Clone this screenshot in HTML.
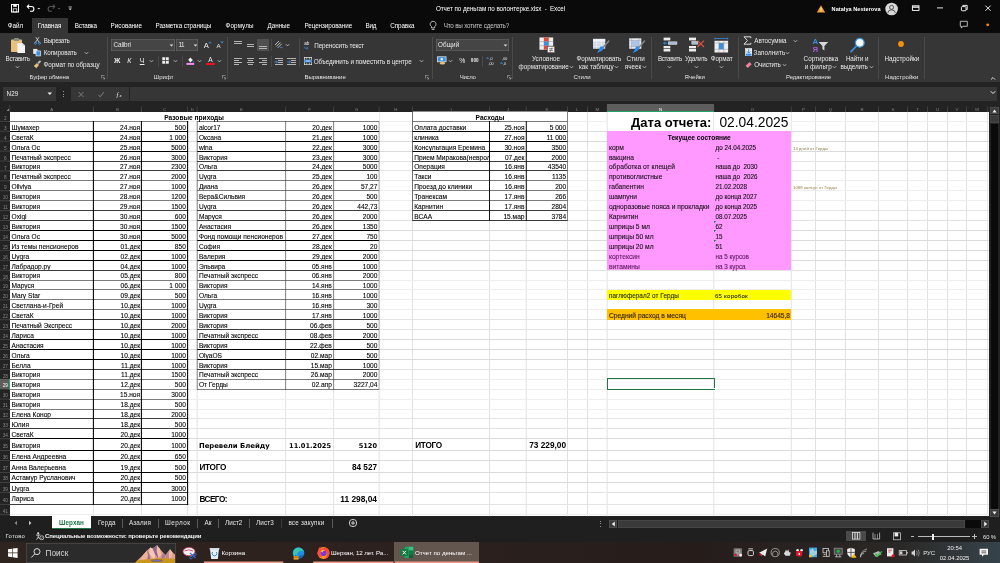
<!DOCTYPE html>
<html lang="ru"><head><meta charset="utf-8"><title>Отчет по деньгам по волонтерке.xlsx - Excel</title><style>
html,body{margin:0;padding:0;background:#0a0a0a;}
#app{position:relative;width:1000px;height:563px;overflow:hidden;will-change:transform;font-family:"Liberation Sans",sans-serif;}
#app div,#app span.t,#app svg{position:absolute;}
#app span.t{white-space:nowrap;display:block;}
#app span.k{-webkit-text-stroke:.1px currentColor;}
</style></head><body>
<div id="app">
<div style="left:0.00px;top:0.00px;width:1000.00px;height:33.00px;background:#0a0a0a;"></div>
<div style="left:0.00px;top:33.00px;width:1000.00px;height:49.20px;background:#363636;"></div>
<div style="left:0.00px;top:82.20px;width:1000.00px;height:29.60px;background:#232323;"></div>
<div style="left:9.80px;top:111.80px;width:979.20px;height:404.50px;background:#ffffff;"></div>
<div style="left:0.00px;top:111.80px;width:9.80px;height:404.50px;background:#232323;"></div>
<div style="left:989.00px;top:103.50px;width:11.00px;height:413.80px;background:#232323;"></div>
<div style="left:0.00px;top:516.30px;width:1000.00px;height:13.30px;background:#1f1f1f;"></div>
<div style="left:0.00px;top:529.60px;width:1000.00px;height:12.40px;background:#1f1f1f;"></div>
<div style="left:0.00px;top:541.80px;width:1000.00px;height:21.20px;background:#2b211e;background:linear-gradient(90deg,#30241f 0%,#2c211e 40%,#261d1b 70%,#2a2826 90%,#36434b 100%);"></div>
<span class="t" style="top:4px;font-size:6.3px;line-height:9px;color:#ffffff;letter-spacing:-0.080px;left:436.00px;white-space:pre;">Отчет по деньгам по волонтерке.xlsx  -  Excel</span>
<span class="t" style="top:5px;font-size:5.6px;line-height:8px;color:#ffffff;font-weight:700;letter-spacing:0.028px;left:831.60px;">Natalya Nesterova</span>
<svg style="left:10px;top:2px" width="70" height="14" viewBox="0 0 70 14">
<g fill="none" stroke="#fff" stroke-width="1">
<rect x="1.5" y="2.5" width="7" height="7.5"/><rect x="3.2" y="2.5" width="3.6" height="2.3" fill="#fff" stroke="none"/><rect x="3.2" y="6.8" width="3.6" height="3.2" stroke-width=".7"/>
<path d="M17.5 4.5 h4 a2.3 2.3 0 0 1 0 4.8 h-1.5" stroke-width="1.1"/><path d="M19.2 2.6 l-2 2 l2 2" stroke-width="1.1"/>
<path d="M44.5 4.5 h-4 a2.3 2.3 0 0 0 0 4.8 h1.5" stroke="#555" stroke-width="1.1"/><path d="M42.8 2.6 l2 2 l-2 2" stroke="#555" stroke-width="1.1"/>
</g>
<path d="M27.3 6 h3 l-1.5 1.6z" fill="#ddd"/><path d="M47.5 6 h3 l-1.5 1.6z" fill="#555"/>
<path d="M58.5 5 h3.4" stroke="#ddd" stroke-width=".8"/><path d="M58.6 6.6 h3.2 l-1.6 1.7z" fill="#ddd"/>
</svg>
<svg style="left:812px;top:0" width="188" height="33" viewBox="0 0 188 33">
<path d="M9 5.2 L13.2 12.6 H4.8z" fill="#f0a030"/><path d="M9 7.6 v2.8" stroke="#fff" stroke-width=".8"/><circle cx="9" cy="11.4" r=".45" fill="#fff"/>
<circle cx="79.6" cy="9" r="6.3" fill="#d8d8d8"/><circle cx="79.6" cy="7.4" r="2" fill="none" stroke="#333" stroke-width=".8"/><path d="M75.8 12.8 a3.9 3.9 0 0 1 7.6 0" fill="none" stroke="#333" stroke-width=".8"/>
<rect x="100.4" y="5.8" width="6.6" height="4.6" fill="none" stroke="#fff" stroke-width=".9"/><path d="M100.4 7.1 h6.6" stroke="#fff" stroke-width="1.3"/>
<path d="M125 7.9 h6" stroke="#fff" stroke-width=".9"/>
<rect x="149.4" y="6.6" width="4.6" height="4.2" rx=".8" fill="none" stroke="#fff" stroke-width=".9"/><path d="M150.8 6.2 v-.8 h4.4 v4.2 h-1" fill="none" stroke="#fff" stroke-width=".9"/>
<path d="M173.4 5.6 l5.2 5.2 M178.6 5.6 l-5.2 5.2" stroke="#fff" stroke-width=".9"/>
<path d="M148.3 21.3 h7 v5 h-4.5 l-1.4 1.8 v-1.8 h-1.1z" fill="none" stroke="#ddd" stroke-width=".8"/>
<circle cx="175.7" cy="24.8" r="1.4" fill="#f29111"/>
</svg>
<div style="left:32.10px;top:17.80px;width:36.00px;height:15.40px;background:#363636;"></div>
<span class="t" style="top:21px;font-size:6.3px;line-height:9px;color:#ffffff;letter-spacing:0.004px;left:7.75px;">Файл</span>
<span class="t" style="top:21px;font-size:6.3px;line-height:9px;color:#ffffff;letter-spacing:-0.067px;left:37.75px;">Главная</span>
<span class="t" style="top:21px;font-size:6.3px;line-height:9px;color:#ffffff;letter-spacing:-0.179px;left:74.75px;">Вставка</span>
<span class="t" style="top:21px;font-size:6.3px;line-height:9px;color:#ffffff;letter-spacing:-0.035px;left:110.60px;">Рисование</span>
<span class="t" style="top:21px;font-size:6.3px;line-height:9px;color:#ffffff;letter-spacing:-0.090px;left:155.60px;">Разметка страницы</span>
<span class="t" style="top:21px;font-size:6.3px;line-height:9px;color:#ffffff;letter-spacing:0.085px;left:225.60px;">Формулы</span>
<span class="t" style="top:21px;font-size:6.3px;line-height:9px;color:#ffffff;letter-spacing:-0.058px;left:267.60px;">Данные</span>
<span class="t" style="top:21px;font-size:6.3px;line-height:9px;color:#ffffff;letter-spacing:-0.066px;left:304.40px;">Рецензирование</span>
<span class="t" style="top:21px;font-size:6.3px;line-height:9px;color:#ffffff;letter-spacing:-0.235px;left:365.60px;">Вид</span>
<span class="t" style="top:21px;font-size:6.3px;line-height:9px;color:#ffffff;letter-spacing:-0.072px;left:390.20px;">Справка</span>
<span class="t" style="top:21px;font-size:6.3px;line-height:9px;color:#c4c4c4;letter-spacing:-0.197px;left:443.70px;">Что вы хотите сделать?</span>
<svg style="left:428px;top:20px" width="10" height="12" viewBox="0 0 10 12"><path d="M3.5 6.6 a2.9 2.9 0 1 1 3.2 0 v1.3 h-3.2z M3.7 9.4 h2.8" fill="none" stroke="#ddd" stroke-width=".8"/></svg>
<div style="left:106.90px;top:36.50px;width:0.80px;height:42.00px;background:#4a4a4a;"></div>
<div style="left:227.40px;top:36.50px;width:0.80px;height:42.00px;background:#4a4a4a;"></div>
<div style="left:431.60px;top:36.50px;width:0.80px;height:42.00px;background:#4a4a4a;"></div>
<div style="left:512.00px;top:36.50px;width:0.80px;height:42.00px;background:#4a4a4a;"></div>
<div style="left:651.40px;top:36.50px;width:0.80px;height:42.00px;background:#4a4a4a;"></div>
<div style="left:738.00px;top:36.50px;width:0.80px;height:42.00px;background:#4a4a4a;"></div>
<div style="left:878.20px;top:36.50px;width:0.80px;height:42.00px;background:#4a4a4a;"></div>
<div style="left:924.00px;top:36.50px;width:0.80px;height:42.00px;background:#4a4a4a;"></div>
<span class="t" style="top:73px;font-size:6.0px;line-height:8px;color:#e2e2e2;letter-spacing:-0.123px;left:29.60px;">Буфер обмена</span>
<span class="t" style="top:73px;font-size:6.0px;line-height:8px;color:#e2e2e2;letter-spacing:0.050px;left:153.60px;">Шрифт</span>
<span class="t" style="top:73px;font-size:6.0px;line-height:8px;color:#e2e2e2;letter-spacing:0.007px;left:304.40px;">Выравнивание</span>
<span class="t" style="top:73px;font-size:6.0px;line-height:8px;color:#e2e2e2;letter-spacing:-0.313px;left:459.80px;">Число</span>
<span class="t" style="top:73px;font-size:6.0px;line-height:8px;color:#e2e2e2;letter-spacing:-0.019px;left:573.50px;">Стили</span>
<span class="t" style="top:73px;font-size:6.0px;line-height:8px;color:#e2e2e2;letter-spacing:0.046px;left:684.50px;">Ячейки</span>
<span class="t" style="top:73px;font-size:6.0px;line-height:8px;color:#e2e2e2;letter-spacing:-0.044px;left:786.00px;">Редактирование</span>
<span class="t" style="top:73px;font-size:6.0px;line-height:8px;color:#e2e2e2;letter-spacing:0.048px;left:885.00px;">Надстройки</span>
<svg style="left:101px;top:75.2px" width="4.4" height="4.4" viewBox="0 0 5 5"><path d="M.4 4 V.4 H4 M2 2 L4.4 4.4 M4.5 2.6 V4.5 H2.6" fill="none" stroke="#bbb" stroke-width=".7"/></svg>
<svg style="left:222px;top:75.2px" width="4.4" height="4.4" viewBox="0 0 5 5"><path d="M.4 4 V.4 H4 M2 2 L4.4 4.4 M4.5 2.6 V4.5 H2.6" fill="none" stroke="#bbb" stroke-width=".7"/></svg>
<svg style="left:425px;top:75.2px" width="4.4" height="4.4" viewBox="0 0 5 5"><path d="M.4 4 V.4 H4 M2 2 L4.4 4.4 M4.5 2.6 V4.5 H2.6" fill="none" stroke="#bbb" stroke-width=".7"/></svg>
<svg style="left:507.3px;top:75.2px" width="4.4" height="4.4" viewBox="0 0 5 5"><path d="M.4 4 V.4 H4 M2 2 L4.4 4.4 M4.5 2.6 V4.5 H2.6" fill="none" stroke="#bbb" stroke-width=".7"/></svg>
<svg style="left:989.9px;top:75.6px" width="6" height="5" viewBox="0 0 6 5"><path d="M.9 3.6 L3 1.5 L5.1 3.600" fill="none" stroke="#e6e6e6" stroke-width=".9"/></svg>
<svg style="left:7px;top:36px" width="22" height="20" viewBox="0 0 22 20">
<rect x="4" y="3.4" width="11" height="12.6" rx=".8" fill="#e8c27a"/><rect x="7" y="2.1" width="5" height="3" rx=".7" fill="#8a8a8a"/>
<path d="M10.4 7 h5 l2.6 2.6 v7.4 h-7.6z" fill="#f4f4f4"/><path d="M15.4 7 v2.6 h2.6" fill="#cfcfcf"/></svg>
<span class="t" style="top:54px;font-size:6.3px;line-height:9px;color:#e8e8e8;letter-spacing:-0.319px;left:5.60px;">Вставить</span>
<svg style="left:15.00px;top:65.20px" width="5" height="4" viewBox="0 0 5 4"><path d="M.8 1.2 L2.5 2.9 L4.2 1.2" fill="none" stroke="#cfcfcf" stroke-width=".8"/></svg>
<svg style="left:33px;top:36px" width="12" height="36" viewBox="0 0 12 36">
<path d="M2.8 1.2 L6.4 6.6 M6 1.2 L2.4 6.6" stroke="#ddd" stroke-width=".8"/><circle cx="2.4" cy="7.2" r="1.1" fill="none" stroke="#4a9be8" stroke-width=".8"/><circle cx="6.4" cy="7.2" r="1.1" fill="none" stroke="#4a9be8" stroke-width=".8"/>
<rect x=".2" y="12.9" width="4.2" height="5" fill="#e8e8e8"/><rect x="3" y="14.9" width="4.6" height="5" fill="#3b8ee0" stroke="#e8e8e8" stroke-width=".7"/>
<path d="M.8 30 l3.2-3 l2 2 l-2.6 3.2z" fill="#e8c27a"/><path d="M4.4 26.600 l2.600-2.400 l1.200 1.200 l-2.400 2.600z" fill="#bdbdbd"/></svg>
<span class="t" style="top:36px;font-size:6.3px;line-height:9px;color:#e8e8e8;letter-spacing:-0.283px;left:43.75px;">Вырезать</span>
<span class="t" style="top:48px;font-size:6.3px;line-height:9px;color:#e8e8e8;letter-spacing:-0.106px;left:43.75px;">Копировать</span>
<svg style="left:84.10px;top:51.40px" width="5" height="4" viewBox="0 0 5 4"><path d="M.8 1.2 L2.5 2.9 L4.2 1.2" fill="none" stroke="#cfcfcf" stroke-width=".8"/></svg>
<span class="t" style="top:60px;font-size:6.3px;line-height:9px;color:#e8e8e8;letter-spacing:-0.022px;left:43.50px;">Формат по образцу</span>
<div style="left:111.20px;top:39.30px;width:64.30px;height:11.50px;background:#454545;box-shadow:inset 0 0 0 .6px #6a6a6a;"></div>
<div style="left:176.30px;top:39.30px;width:22.20px;height:11.50px;background:#454545;box-shadow:inset 0 0 0 .6px #6a6a6a;"></div>
<span class="t" style="top:40px;font-size:6.3px;line-height:9px;color:#e8e8e8;letter-spacing:-0.080px;left:113.60px;">Calibri</span>
<span class="t" style="top:40px;font-size:6.3px;line-height:9px;color:#e8e8e8;letter-spacing:-0.473px;left:178.40px;">11</span>
<svg style="left:169.00px;top:43.70px" width="5" height="3" viewBox="0 0 5 3"><path d="M.6 .5 h3.8 l-1.9 2z" fill="#ddd"/></svg>
<svg style="left:192.50px;top:43.70px" width="5" height="3" viewBox="0 0 5 3"><path d="M.6 .5 h3.8 l-1.9 2z" fill="#ddd"/></svg>
<span class="t" style="top:41px;font-size:7.6px;line-height:10px;color:#eee;left:56.40px;width:300px;text-align:center;">A</span>
<svg style="left:208.2px;top:40.8px" width="4" height="3" viewBox="0 0 4 3"><path d="M.3 2.3 L2 .4 L3.7 2.3z" fill="#3b8ee0"/></svg>
<span class="t" style="top:41px;font-size:6.2px;line-height:9px;color:#eee;left:68.60px;width:300px;text-align:center;">A</span>
<svg style="left:220.2px;top:41px" width="4" height="3" viewBox="0 0 4 3"><path d="M.3 .5 L2 2.4 L3.7 .5z" fill="#3b8ee0"/></svg>
<span class="t" style="top:56px;font-size:7px;line-height:10px;color:#eee;font-weight:700;left:-32.80px;width:300px;text-align:center;">Ж</span>
<span class="t" style="top:56px;font-size:7px;line-height:10px;color:#eee;left:-20.80px;width:300px;text-align:center;font-style:italic;">К</span>
<span class="t" style="top:56px;font-size:7px;line-height:10px;color:#eee;left:-7.90px;width:300px;text-align:center;text-decoration:underline;">Ч</span>
<svg style="left:148.70px;top:58.80px" width="5" height="4" viewBox="0 0 5 4"><path d="M.8 1.2 L2.5 2.9 L4.2 1.2" fill="none" stroke="#cfcfcf" stroke-width=".8"/></svg>
<div style="left:158.10px;top:55.50px;width:0.60px;height:11.00px;background:#4a4a4a;"></div>
<svg style="left:162.2px;top:57.3px" width="7" height="7" viewBox="0 0 8 8"><rect x=".3" y=".3" width="7.4" height="7.4" fill="#eee"/><path d="M4 .3 v7.4 M.3 4 h7.4" stroke="#363636" stroke-width=".9"/></svg>
<svg style="left:172.70px;top:58.80px" width="5" height="4" viewBox="0 0 5 4"><path d="M.8 1.2 L2.5 2.9 L4.2 1.2" fill="none" stroke="#cfcfcf" stroke-width=".8"/></svg>
<div style="left:182.30px;top:55.50px;width:0.60px;height:11.00px;background:#4a4a4a;"></div>
<svg style="left:185.9px;top:56px" width="9" height="10" viewBox="0 0 9 10"><path d="M2.2 3.8 L4.4 1.6 L6.8 4 L4.4 6.4z" fill="#eee"/><path d="M7.200 4.400 q1 1.400 0 2 q-1-.6 0-2z" fill="#3b8ee0"/><rect x=".4" y="6.900" width="7.800" height="2" fill="#f28cf0"/></svg>
<svg style="left:196.70px;top:58.80px" width="5" height="4" viewBox="0 0 5 4"><path d="M.8 1.2 L2.5 2.9 L4.2 1.2" fill="none" stroke="#cfcfcf" stroke-width=".8"/></svg>
<span class="t" style="top:55px;font-size:6.6px;line-height:9px;color:#eee;left:60.50px;width:300px;text-align:center;">A</span>
<div style="left:205.90px;top:62.90px;width:9.00px;height:2.00px;background:#e81123;"></div>
<svg style="left:217.00px;top:58.80px" width="5" height="4" viewBox="0 0 5 4"><path d="M.8 1.2 L2.5 2.9 L4.2 1.2" fill="none" stroke="#cfcfcf" stroke-width=".8"/></svg>
<div style="left:233.80px;top:40.60px;width:8.00px;height:0.80px;background:#b4b4b4;"></div>
<div style="left:233.80px;top:42.80px;width:8.00px;height:0.80px;background:#b4b4b4;"></div>
<div style="left:246.60px;top:43.80px;width:7.80px;height:0.80px;background:#b4b4b4;"></div>
<div style="left:246.60px;top:46.00px;width:7.80px;height:0.80px;background:#b4b4b4;"></div>
<div style="left:256.90px;top:38.80px;width:12.20px;height:12.20px;background:#505050;"></div>
<div style="left:259.20px;top:46.00px;width:7.80px;height:0.80px;background:#b4b4b4;"></div>
<div style="left:259.20px;top:48.20px;width:7.80px;height:0.80px;background:#b4b4b4;"></div>
<div style="left:271.30px;top:38.50px;width:0.60px;height:12.00px;background:#4a4a4a;"></div>
<svg style="left:274.4px;top:40px" width="10" height="9" viewBox="0 0 10 9"><path d="M1 5 L5 1 M2.4 6.4 L6.4 2.4 M3.8 7.8 L7.8 3.8" stroke="#ddd" stroke-width=".8"/><path d="M6 7.6 h2.6" stroke="#3b8ee0" stroke-width=".8"/></svg>
<svg style="left:284.90px;top:43.00px" width="5" height="4" viewBox="0 0 5 4"><path d="M.8 1.2 L2.5 2.9 L4.2 1.2" fill="none" stroke="#cfcfcf" stroke-width=".8"/></svg>
<div style="left:299.30px;top:38.40px;width:0.60px;height:28.40px;background:#4a4a4a;"></div>
<div style="left:233.80px;top:58.40px;width:8.00px;height:0.75px;background:#b4b4b4;"></div>
<div style="left:233.80px;top:60.30px;width:5.40px;height:0.75px;background:#b4b4b4;"></div>
<div style="left:233.80px;top:62.20px;width:8.00px;height:0.75px;background:#b4b4b4;"></div>
<div style="left:233.80px;top:64.10px;width:5.40px;height:0.75px;background:#b4b4b4;"></div>
<div style="left:246.60px;top:58.40px;width:7.80px;height:0.75px;background:#b4b4b4;"></div>
<div style="left:248.00px;top:60.30px;width:5.00px;height:0.75px;background:#b4b4b4;"></div>
<div style="left:246.60px;top:62.20px;width:7.80px;height:0.75px;background:#b4b4b4;"></div>
<div style="left:248.00px;top:64.10px;width:5.00px;height:0.75px;background:#b4b4b4;"></div>
<div style="left:259.20px;top:58.40px;width:7.80px;height:0.75px;background:#b4b4b4;"></div>
<div style="left:261.60px;top:60.30px;width:5.40px;height:0.75px;background:#b4b4b4;"></div>
<div style="left:259.20px;top:62.20px;width:7.80px;height:0.75px;background:#b4b4b4;"></div>
<div style="left:261.60px;top:64.10px;width:5.40px;height:0.75px;background:#b4b4b4;"></div>
<div style="left:271.30px;top:55.50px;width:0.60px;height:11.00px;background:#4a4a4a;"></div>
<div style="left:274.80px;top:58.40px;width:8.40px;height:0.75px;background:#b4b4b4;"></div>
<div style="left:278.40px;top:60.30px;width:4.80px;height:0.75px;background:#b4b4b4;"></div>
<div style="left:278.40px;top:62.20px;width:4.80px;height:0.75px;background:#b4b4b4;"></div>
<div style="left:274.80px;top:64.10px;width:8.40px;height:0.75px;background:#b4b4b4;"></div>
<svg style="left:274.40000000000003px;top:59.6px" width="4" height="4" viewBox="0 0 4 4"><path d="M.2 2 h3.2 M2 .6 L3.5 2 L2 3.4" fill="none" stroke="#3b8ee0" stroke-width=".8"/></svg>
<div style="left:287.20px;top:58.40px;width:8.40px;height:0.75px;background:#b4b4b4;"></div>
<div style="left:290.80px;top:60.30px;width:4.80px;height:0.75px;background:#b4b4b4;"></div>
<div style="left:290.80px;top:62.20px;width:4.80px;height:0.75px;background:#b4b4b4;"></div>
<div style="left:287.20px;top:64.10px;width:8.40px;height:0.75px;background:#b4b4b4;"></div>
<svg style="left:286.8px;top:59.6px" width="4" height="4" viewBox="0 0 4 4"><path d="M.2 2 h3.2 M2 .6 L3.5 2 L2 3.4" fill="none" stroke="#3b8ee0" stroke-width=".8"/></svg>
<svg style="left:303.8px;top:41px" width="9" height="9" viewBox="0 0 9 9"><text x=".2" y="4.2" font-size="4.6" fill="#eee" font-family="Liberation Sans">ab</text><path d="M.8 5.600 v1.600 h3 M2.800 6 l1.400 1.200 l-1.400 1.200" fill="none" stroke="#3b8ee0" stroke-width=".7"/></svg>
<span class="t" style="top:41px;font-size:6.3px;line-height:9px;color:#e8e8e8;letter-spacing:-0.129px;left:314.30px;">Переносить текст</span>
<svg style="left:303.8px;top:56.7px" width="8.2" height="8.2" viewBox="0 0 9 9"><rect x=".5" y=".5" width="8" height="8" fill="none" stroke="#eee" stroke-width=".8"/><rect x=".5" y="2.8" width="8" height="3.2" fill="#3b8ee0"/><path d="M2 4.400 h5" stroke="#fff" stroke-width=".7"/><path d="M3 .5 v2 M6 .5 v2 M3 6.400 v2 M6 6.400 v2" stroke="#eee" stroke-width=".6"/></svg>
<span class="t" style="top:57px;font-size:6.3px;line-height:9px;color:#e8e8e8;letter-spacing:-0.089px;left:313.70px;">Объединить и поместить в центре</span>
<svg style="left:418.50px;top:59.30px" width="5" height="4" viewBox="0 0 5 4"><path d="M.8 1.2 L2.5 2.9 L4.2 1.2" fill="none" stroke="#cfcfcf" stroke-width=".8"/></svg>
<div style="left:436.00px;top:39.30px;width:73.00px;height:11.50px;background:#454545;box-shadow:inset 0 0 0 .6px #6a6a6a;"></div>
<span class="t" style="top:40px;font-size:6.3px;line-height:9px;color:#e8e8e8;letter-spacing:0.173px;left:437.90px;">Общий</span>
<svg style="left:502.50px;top:43.70px" width="5" height="3" viewBox="0 0 5 3"><path d="M.6 .5 h3.8 l-1.9 2z" fill="#ddd"/></svg>
<svg style="left:436.8px;top:56px" width="10" height="9" viewBox="0 0 10 9"><rect x=".5" y=".8" width="8.600" height="5" fill="#3b8ee0" stroke="#eee" stroke-width=".7"/><circle cx="4.800" cy="3.300" r="1.200" fill="#eee"/><ellipse cx="5.400" cy="7.200" rx="2.800" ry="1.300" fill="#e8c27a"/></svg>
<svg style="left:447.90px;top:58.80px" width="5" height="4" viewBox="0 0 5 4"><path d="M.8 1.2 L2.5 2.9 L4.2 1.2" fill="none" stroke="#cfcfcf" stroke-width=".8"/></svg>
<span class="t" style="top:56px;font-size:6.8px;line-height:9px;color:#eee;left:312.40px;width:300px;text-align:center;">%</span>
<span class="t" style="top:58px;font-size:4.6px;line-height:6px;color:#eee;font-weight:700;left:324.70px;width:300px;text-align:center;">000</span>
<div style="left:482.30px;top:55.50px;width:0.60px;height:11.00px;background:#4a4a4a;"></div>
<svg style="left:485.6px;top:56px" width="23" height="10" viewBox="0 0 23 10"><g fill="#eee" font-family="Liberation Sans" font-size="3.6"><text x="3.4" y="3.6">,0</text><text x="2.4" y="8.6">,00</text><text x="16.2" y="3.6">,00</text><text x="17" y="8.6">,0</text></g><path d="M3 2.2 h-2.400 M1.600 1.200 l-1 1 l1 1" fill="none" stroke="#3b8ee0" stroke-width=".7"/><path d="M14 7.200 h2.400 M15.400 6.200 l1 1 l-1 1" fill="none" stroke="#3b8ee0" stroke-width=".7"/></svg>
<svg style="left:538.8px;top:36.8px" width="17" height="17" viewBox="0 0 18 18">
<rect x=".5" y=".5" width="14.5" height="13" fill="#f0f0f0"/><path d="M.5 4.8 h14.5 M.5 9.2 h14.5 M5.3 .5 v13 M10.2 .5 v13" stroke="#9a9a9a" stroke-width=".6"/>
<rect x="5.3" y=".5" width="4.9" height="4.3" fill="#e0483e"/><rect x="5.3" y="4.8" width="4.9" height="4.4" fill="#3b8ee0"/><rect x="5.3" y="9.2" width="4.9" height="4.3" fill="#e0483e"/>
<rect x="9" y="10" width="7.5" height="6.5" fill="#f4f4f4" stroke="#555" stroke-width=".6"/><path d="M10.600 12.400 h4.400 M10.600 14.400 h4.400 M12 15.600 l1.800-4.400" stroke="#444" stroke-width=".6"/></svg>
<span class="t" style="top:54px;font-size:6.3px;line-height:9px;color:#e8e8e8;letter-spacing:0.048px;left:531.90px;">Условное</span>
<span class="t" style="top:62px;font-size:6.3px;line-height:9px;color:#e8e8e8;letter-spacing:-0.019px;left:518.50px;">форматирование</span>
<svg style="left:568.90px;top:65.40px" width="5" height="4" viewBox="0 0 5 4"><path d="M.8 1.2 L2.5 2.9 L4.2 1.2" fill="none" stroke="#cfcfcf" stroke-width=".8"/></svg>
<svg style="left:592px;top:37px" width="20" height="18" viewBox="0 0 20 18">
<rect x="1" y="1.9" width="12.2" height="9.9" fill="#c9d3e2"/><rect x="1" y="1.900" width="12.200" height="2.400" fill="#eef1f6"/>
<path d="M1 4.300 h12.200 M1 6.800 h12.200 M1 9.300 h12.200 M4.600 1.900 v9.900 M9.400 1.900 v9.900" stroke="#f6f8fb" stroke-width=".6"/>
<path d="M16.800 4 L10.600 11" stroke="#8a8a8a" stroke-width="1.500" stroke-linecap="round"/><path d="M11.600 10.200 q.6 3.600-6.800 5.800 q2.400-2.400 3.400-6.200 q1.800-1.400 3.400 .4z" fill="#2f8be6"/></svg>
<span class="t" style="top:54px;font-size:6.3px;line-height:9px;color:#e8e8e8;letter-spacing:-0.085px;left:576.60px;">Форматировать</span>
<span class="t" style="top:62px;font-size:6.3px;line-height:9px;color:#e8e8e8;letter-spacing:0.027px;left:578.90px;">как таблицу</span>
<svg style="left:614.00px;top:65.40px" width="5" height="4" viewBox="0 0 5 4"><path d="M.8 1.2 L2.5 2.9 L4.2 1.2" fill="none" stroke="#cfcfcf" stroke-width=".8"/></svg>
<svg style="left:628px;top:37px" width="20" height="18" viewBox="0 0 20 18">
<rect x="1.200" y="1.300" width="12.100" height="10.500" fill="#e6e9ee"/><rect x="3.400" y="3.500" width="7.700" height="6" fill="#a9c6ea"/>
<path d="M1.200 3.500 h12.100 M1.200 9.500 h12.100 M3.400 1.300 v10.500 M11.100 1.300 v10.500" stroke="#9aa2ae" stroke-width=".5"/>
<path d="M16.500 4 L10.300 11" stroke="#8a8a8a" stroke-width="1.500" stroke-linecap="round"/><path d="M11.300 10.200 q.6 3.600-6.800 5.800 q2.400-2.400 3.400-6.200 q1.800-1.400 3.400 .4z" fill="#2f8be6"/></svg>
<span class="t" style="top:54px;font-size:6.3px;line-height:9px;color:#e8e8e8;letter-spacing:-0.008px;left:626.60px;">Стили</span>
<span class="t" style="top:62px;font-size:6.3px;line-height:9px;color:#e8e8e8;letter-spacing:-0.011px;left:624.80px;">ячеек</span>
<svg style="left:641.70px;top:65.40px" width="5" height="4" viewBox="0 0 5 4"><path d="M.8 1.2 L2.5 2.9 L4.2 1.2" fill="none" stroke="#cfcfcf" stroke-width=".8"/></svg>
<svg style="left:661px;top:37px" width="18" height="16" viewBox="0 0 18 16">
<rect x="2.600" y=".6" width="6.700" height="2.800" fill="#ececec"/><rect x="7.200" y="4.800" width="8.800" height="2.800" fill="#a9bdd6" stroke="#e8e8e8" stroke-width=".4"/><path d="M6.400 6.200 h-3.800 M4.200 4.800 l-1.600 1.400 l1.600 1.400" fill="none" stroke="#3b8ee0" stroke-width=".9"/>
<rect x="2.600" y="9" width="6.700" height="2.200" fill="#ececec"/><rect x="2.600" y="11.800" width="6.700" height="2.700" fill="#ececec"/></svg>
<span class="t" style="top:54px;font-size:6.3px;line-height:9px;color:#e8e8e8;letter-spacing:-0.313px;left:657.90px;">Вставить</span>
<svg style="left:667.20px;top:65.20px" width="5" height="4" viewBox="0 0 5 4"><path d="M.8 1.2 L2.5 2.9 L4.2 1.2" fill="none" stroke="#cfcfcf" stroke-width=".8"/></svg>
<svg style="left:687px;top:37px" width="18" height="16" viewBox="0 0 18 16">
<rect x="2" y=".6" width="7" height="2.800" fill="#ececec"/><rect x="4.800" y="4.200" width="6.200" height="3" fill="#a9bdd6" stroke="#e8e8e8" stroke-width=".4"/>
<rect x="2" y="9" width="7" height="2.200" fill="#ececec"/><rect x="2" y="11.800" width="7" height="2.700" fill="#ececec"/>
<path d="M10.400 3.600 l6.600 6.400 M17 3.600 l-6.600 6.400" stroke="#e4523c" stroke-width="1.100"/></svg>
<span class="t" style="top:54px;font-size:6.3px;line-height:9px;color:#e8e8e8;letter-spacing:-0.250px;left:685.00px;">Удалить</span>
<svg style="left:693.50px;top:65.20px" width="5" height="4" viewBox="0 0 5 4"><path d="M.8 1.2 L2.5 2.9 L4.2 1.2" fill="none" stroke="#cfcfcf" stroke-width=".8"/></svg>
<svg style="left:713.4px;top:36.6px" width="17" height="17" viewBox="0 0 18 18">
<path d="M2 1.600 h13.600 M2 .4 v2.400 M15.600 .4 v2.400" stroke="#3b8ee0" stroke-width=".8"/>
<rect x="1.6" y="4" width="14.4" height="12.4" fill="#f0f0f0"/><rect x="6.2" y="6.4" width="5.2" height="6.6" fill="#3b8ee0"/>
<path d="M1.600 6.400 h14.400 M1.600 13 h14.400 M6.200 4 v12.400 M11.400 4 v12.400" stroke="#8a8a8a" stroke-width=".5"/></svg>
<span class="t" style="top:54px;font-size:6.3px;line-height:9px;color:#e8e8e8;letter-spacing:-0.129px;left:710.80px;">Формат</span>
<svg style="left:718.90px;top:65.20px" width="5" height="4" viewBox="0 0 5 4"><path d="M.8 1.2 L2.5 2.9 L4.2 1.2" fill="none" stroke="#cfcfcf" stroke-width=".8"/></svg>
<svg style="left:743.4px;top:36.4px" width="9" height="9" viewBox="0 0 9 9"><path d="M7.800 2.200 V.8 H1 L4.400 4.500 L1 8.200 H7.800 V6.800" fill="none" stroke="#eee" stroke-width=".9"/></svg>
<span class="t" style="top:36px;font-size:6.3px;line-height:9px;color:#e8e8e8;letter-spacing:0.010px;left:754.30px;">Автосумма</span>
<svg style="left:793.40px;top:38.80px" width="5" height="4" viewBox="0 0 5 4"><path d="M.8 1.2 L2.5 2.9 L4.2 1.2" fill="none" stroke="#cfcfcf" stroke-width=".8"/></svg>
<svg style="left:744.6px;top:47.8px" width="7.4" height="8.6" viewBox="0 0 7.4 8.6"><rect x=".4" y=".4" width="6.600" height="7.800" fill="#e8ecf2" stroke="#f4f4f4" stroke-width=".5"/><rect x=".9" y="5.600" width="5.600" height="2.200" fill="#3b8ee0"/><path d="M3.700 1.200 v3.600 M2 3.400 l1.700 1.700 l1.700-1.700" fill="none" stroke="#2f7fd8" stroke-width=".9"/></svg>
<span class="t" style="top:48px;font-size:6.3px;line-height:9px;color:#e8e8e8;letter-spacing:0.086px;left:753.60px;">Заполнить</span>
<svg style="left:785.40px;top:51.20px" width="5" height="4" viewBox="0 0 5 4"><path d="M.8 1.2 L2.5 2.9 L4.2 1.2" fill="none" stroke="#cfcfcf" stroke-width=".8"/></svg>
<svg style="left:744.6px;top:61px" width="8" height="7" viewBox="0 0 9 8"><path d="M1 5 L5 1 L7.600 3.600 L3.600 7.400 H2.400z" fill="#f07a9a"/><path d="M1 5 l2.400 2.400" stroke="#fff" stroke-width=".5"/></svg>
<span class="t" style="top:60px;font-size:6.3px;line-height:9px;color:#e8e8e8;letter-spacing:-0.115px;left:754.30px;">Очистить</span>
<svg style="left:781.60px;top:63.30px" width="5" height="4" viewBox="0 0 5 4"><path d="M.8 1.2 L2.5 2.9 L4.2 1.2" fill="none" stroke="#cfcfcf" stroke-width=".8"/></svg>
<svg style="left:811.3px;top:37px" width="20" height="17" viewBox="0 0 20 17">
<text x="1.400" y="6.600" font-size="7.800" font-weight="700" fill="#3b8ee0" font-family="Liberation Sans">А</text><text x="1.600" y="14.600" font-size="7.800" font-weight="700" fill="#a45fd6" font-family="Liberation Sans">Я</text>
<path d="M7.600 5 h9.600 l-3.800 4 v4.400 l-2 -1.400 v-3z" fill="#d8d8d8"/></svg>
<span class="t" style="top:54px;font-size:6.3px;line-height:9px;color:#e8e8e8;letter-spacing:0.004px;left:803.60px;">Сортировка</span>
<span class="t" style="top:62px;font-size:6.3px;line-height:9px;color:#e8e8e8;letter-spacing:0.021px;left:804.80px;">и фильтр</span>
<svg style="left:832.40px;top:65.40px" width="5" height="4" viewBox="0 0 5 4"><path d="M.8 1.2 L2.5 2.9 L4.2 1.2" fill="none" stroke="#cfcfcf" stroke-width=".8"/></svg>
<svg style="left:847.5px;top:36.6px" width="20" height="18" viewBox="0 0 20 18">
<circle cx="11.8" cy="5.8" r="4.4" fill="#f4f8ff" stroke="#3b8ee0" stroke-width="1.3"/><path d="M8.400 9.200 L3 14.600" stroke="#3b8ee0" stroke-width="1.800" stroke-linecap="round"/></svg>
<span class="t" style="top:54px;font-size:6.3px;line-height:9px;color:#e8e8e8;letter-spacing:-0.121px;left:845.90px;">Найти и</span>
<span class="t" style="top:62px;font-size:6.3px;line-height:9px;color:#e8e8e8;letter-spacing:-0.113px;left:840.50px;">выделить</span>
<svg style="left:868.60px;top:65.40px" width="5" height="4" viewBox="0 0 5 4"><path d="M.8 1.2 L2.5 2.9 L4.2 1.2" fill="none" stroke="#cfcfcf" stroke-width=".8"/></svg>
<svg style="left:897px;top:40.3px" width="8" height="8" viewBox="0 0 8 8"><circle cx="4" cy="4" r="2.900" fill="#f29111"/></svg>
<span class="t" style="top:54px;font-size:6.3px;line-height:9px;color:#e8e8e8;letter-spacing:0.044px;left:884.40px;">Надстройки</span>
<div style="left:2.80px;top:87.00px;width:53.00px;height:13.80px;background:#363636;"></div>
<span class="t" style="top:89px;font-size:6.3px;line-height:9px;color:#eee;left:6.60px;">N29</span>
<svg style="left:47px;top:92px" width="6" height="4" viewBox="0 0 6 4"><path d="M.5 .5 h4.600 l-2.300 2.600z" fill="#eee"/></svg>
<div style="left:62.90px;top:91.20px;width:0.90px;height:0.90px;background:#ddd;border-radius:50%;"></div>
<div style="left:62.90px;top:93.60px;width:0.90px;height:0.90px;background:#ddd;border-radius:50%;"></div>
<div style="left:62.90px;top:96.00px;width:0.90px;height:0.90px;background:#ddd;border-radius:50%;"></div>
<div style="left:71.00px;top:87.00px;width:57.50px;height:13.80px;background:#363636;"></div>
<svg style="left:76px;top:89.5px" width="50" height="9" viewBox="0 0 50 9"><path d="M2.600 2 l5 5 M7.600 2 l-5 5" stroke="#8a8a8a" stroke-width=".8"/><path d="M22.400 4.800 l1.800 2 l3.600-4.600" fill="none" stroke="#8a8a8a" stroke-width=".9"/><text x="40.6" y="7" font-size="6.4" fill="#eee" font-family="Liberation Serif" font-style="italic">f</text><text x="43.4" y="7.4" font-size="4.6" fill="#eee" font-family="Liberation Serif" font-style="italic">x</text></svg>
<div style="left:130.00px;top:87.00px;width:867.00px;height:13.80px;background:#363636;"></div>
<svg style="left:990px;top:90.400px" width="6" height="5" viewBox="0 0 6 5"><path d="M.8 1.300 L3 3.500 L5.200 1.300" fill="none" stroke="#f0f0f0" stroke-width="1"/></svg>
<span class="t" style="top:107px;font-size:4.4px;line-height:6px;color:#868686;left:-98.40px;width:300px;text-align:center;">A</span>
<span class="t" style="top:107px;font-size:4.4px;line-height:6px;color:#868686;left:-32.60px;width:300px;text-align:center;">B</span>
<span class="t" style="top:107px;font-size:4.4px;line-height:6px;color:#868686;left:14.50px;width:300px;text-align:center;">C</span>
<span class="t" style="top:107px;font-size:4.4px;line-height:6px;color:#868686;left:42.40px;width:300px;text-align:center;">D</span>
<span class="t" style="top:107px;font-size:4.4px;line-height:6px;color:#868686;left:91.40px;width:300px;text-align:center;">E</span>
<span class="t" style="top:107px;font-size:4.4px;line-height:6px;color:#868686;left:159.60px;width:300px;text-align:center;">F</span>
<span class="t" style="top:107px;font-size:4.4px;line-height:6px;color:#868686;left:206.35px;width:300px;text-align:center;">G</span>
<span class="t" style="top:107px;font-size:4.4px;line-height:6px;color:#868686;left:245.80px;width:300px;text-align:center;">H</span>
<span class="t" style="top:107px;font-size:4.4px;line-height:6px;color:#868686;left:301.00px;width:300px;text-align:center;">I</span>
<span class="t" style="top:107px;font-size:4.4px;line-height:6px;color:#868686;left:357.90px;width:300px;text-align:center;">J</span>
<span class="t" style="top:107px;font-size:4.4px;line-height:6px;color:#868686;left:396.90px;width:300px;text-align:center;">K</span>
<span class="t" style="top:107px;font-size:4.4px;line-height:6px;color:#868686;left:427.50px;width:300px;text-align:center;">L</span>
<span class="t" style="top:107px;font-size:4.4px;line-height:6px;color:#868686;left:447.35px;width:300px;text-align:center;">M</span>
<div style="left:607.20px;top:104.10px;width:106.60px;height:7.70px;background:#5e5e5e;border-bottom:.9px solid #21a366;box-sizing:border-box;"></div>
<span class="t" style="top:107px;font-size:4.4px;line-height:6px;color:#ffffff;left:510.50px;width:300px;text-align:center;">N</span>
<span class="t" style="top:107px;font-size:4.4px;line-height:6px;color:#868686;left:602.55px;width:300px;text-align:center;">O</span>
<span class="t" style="top:107px;font-size:4.4px;line-height:6px;color:#868686;left:653.40px;width:300px;text-align:center;">P</span>
<span class="t" style="top:107px;font-size:4.4px;line-height:6px;color:#868686;left:680.50px;width:300px;text-align:center;">Q</span>
<span class="t" style="top:107px;font-size:4.4px;line-height:6px;color:#868686;left:712.00px;width:300px;text-align:center;">R</span>
<span class="t" style="top:107px;font-size:4.4px;line-height:6px;color:#868686;left:743.00px;width:300px;text-align:center;">S</span>
<span class="t" style="top:107px;font-size:4.4px;line-height:6px;color:#868686;left:767.50px;width:300px;text-align:center;">T</span>
<span class="t" style="top:107px;font-size:4.4px;line-height:6px;color:#868686;left:787.50px;width:300px;text-align:center;">U</span>
<span class="t" style="top:107px;font-size:4.4px;line-height:6px;color:#868686;left:807.00px;width:300px;text-align:center;">V</span>
<span class="t" style="top:107px;font-size:4.4px;line-height:6px;color:#868686;left:827.10px;width:300px;text-align:center;">W</span>
<svg style="left:0;top:0" width="1000" height="120" viewBox="0 0 1000 120"><path d="M93.40 106.4V111.8M141.40 106.4V111.8M187.60 106.4V111.8M197.20 106.4V111.8M285.60 106.4V111.8M333.60 106.4V111.8M379.10 106.4V111.8M412.50 106.4V111.8M489.50 106.4V111.8M526.30 106.4V111.8M567.50 106.4V111.8M587.50 106.4V111.8M607.20 106.4V111.8M713.80 106.4V111.8M791.30 106.4V111.8M815.50 106.4V111.8M845.50 106.4V111.8M878.50 106.4V111.8M907.50 106.4V111.8M927.50 106.4V111.8M947.50 106.4V111.8M966.50 106.4V111.8M987.70 106.4V111.8" stroke="#5a5a5a" stroke-width=".55" fill="none"/><path d="M9.8 105V111.8" stroke="#5a5a5a" stroke-width=".55"/></svg>
<svg style="left:5.6px;top:107.6px" width="3.4" height="3.4" viewBox="0 0 4 4"><path d="M3.6 .6 V3.6 H.6z" fill="#8a8a8a"/></svg>
<span class="t" style="top:115px;font-size:4.7px;line-height:7px;color:#868686;left:-144.70px;width:300px;text-align:center;">2</span>
<span class="t" style="top:125px;font-size:4.7px;line-height:7px;color:#868686;left:-144.70px;width:300px;text-align:center;">3</span>
<span class="t" style="top:135px;font-size:4.7px;line-height:7px;color:#868686;left:-144.70px;width:300px;text-align:center;">4</span>
<span class="t" style="top:145px;font-size:4.7px;line-height:7px;color:#868686;left:-144.70px;width:300px;text-align:center;">5</span>
<span class="t" style="top:155px;font-size:4.7px;line-height:7px;color:#868686;left:-144.70px;width:300px;text-align:center;">6</span>
<span class="t" style="top:165px;font-size:4.7px;line-height:7px;color:#868686;left:-144.70px;width:300px;text-align:center;">7</span>
<span class="t" style="top:174px;font-size:4.7px;line-height:7px;color:#868686;left:-144.70px;width:300px;text-align:center;">8</span>
<span class="t" style="top:184px;font-size:4.7px;line-height:7px;color:#868686;left:-144.70px;width:300px;text-align:center;">9</span>
<span class="t" style="top:194px;font-size:4.7px;line-height:7px;color:#868686;left:-144.70px;width:300px;text-align:center;">10</span>
<span class="t" style="top:204px;font-size:4.7px;line-height:7px;color:#868686;left:-144.70px;width:300px;text-align:center;">11</span>
<span class="t" style="top:214px;font-size:4.7px;line-height:7px;color:#868686;left:-144.70px;width:300px;text-align:center;">12</span>
<span class="t" style="top:224px;font-size:4.7px;line-height:7px;color:#868686;left:-144.70px;width:300px;text-align:center;">13</span>
<span class="t" style="top:234px;font-size:4.7px;line-height:7px;color:#868686;left:-144.70px;width:300px;text-align:center;">14</span>
<span class="t" style="top:244px;font-size:4.7px;line-height:7px;color:#868686;left:-144.70px;width:300px;text-align:center;">15</span>
<span class="t" style="top:254px;font-size:4.7px;line-height:7px;color:#868686;left:-144.70px;width:300px;text-align:center;">16</span>
<span class="t" style="top:264px;font-size:4.7px;line-height:7px;color:#868686;left:-144.70px;width:300px;text-align:center;">17</span>
<span class="t" style="top:274px;font-size:4.7px;line-height:7px;color:#868686;left:-144.70px;width:300px;text-align:center;">18</span>
<span class="t" style="top:283px;font-size:4.7px;line-height:7px;color:#868686;left:-144.70px;width:300px;text-align:center;">19</span>
<span class="t" style="top:293px;font-size:4.7px;line-height:7px;color:#868686;left:-144.70px;width:300px;text-align:center;">20</span>
<span class="t" style="top:303px;font-size:4.7px;line-height:7px;color:#868686;left:-144.70px;width:300px;text-align:center;">21</span>
<span class="t" style="top:313px;font-size:4.7px;line-height:7px;color:#868686;left:-144.70px;width:300px;text-align:center;">22</span>
<span class="t" style="top:323px;font-size:4.7px;line-height:7px;color:#868686;left:-144.70px;width:300px;text-align:center;">23</span>
<span class="t" style="top:333px;font-size:4.7px;line-height:7px;color:#868686;left:-144.70px;width:300px;text-align:center;">24</span>
<span class="t" style="top:343px;font-size:4.7px;line-height:7px;color:#868686;left:-144.70px;width:300px;text-align:center;">25</span>
<span class="t" style="top:353px;font-size:4.7px;line-height:7px;color:#868686;left:-144.70px;width:300px;text-align:center;">26</span>
<span class="t" style="top:363px;font-size:4.7px;line-height:7px;color:#868686;left:-144.70px;width:300px;text-align:center;">27</span>
<span class="t" style="top:373px;font-size:4.7px;line-height:7px;color:#868686;left:-144.70px;width:300px;text-align:center;">28</span>
<div style="left:0.00px;top:379.25px;width:9.80px;height:9.92px;background:#5e5e5e;border-right:.9px solid #21a366;box-sizing:border-box;"></div>
<span class="t" style="top:382px;font-size:4.7px;line-height:7px;color:#fff;left:-144.70px;width:300px;text-align:center;">29</span>
<span class="t" style="top:392px;font-size:4.7px;line-height:7px;color:#868686;left:-144.70px;width:300px;text-align:center;">30</span>
<span class="t" style="top:402px;font-size:4.7px;line-height:7px;color:#868686;left:-144.70px;width:300px;text-align:center;">31</span>
<span class="t" style="top:412px;font-size:4.7px;line-height:7px;color:#868686;left:-144.70px;width:300px;text-align:center;">32</span>
<span class="t" style="top:422px;font-size:4.7px;line-height:7px;color:#868686;left:-144.70px;width:300px;text-align:center;">33</span>
<span class="t" style="top:432px;font-size:4.7px;line-height:7px;color:#868686;left:-144.70px;width:300px;text-align:center;">34</span>
<span class="t" style="top:443px;font-size:4.7px;line-height:7px;color:#868686;left:-144.70px;width:300px;text-align:center;">35</span>
<span class="t" style="top:454px;font-size:4.7px;line-height:7px;color:#868686;left:-144.70px;width:300px;text-align:center;">36</span>
<span class="t" style="top:465px;font-size:4.7px;line-height:7px;color:#868686;left:-144.70px;width:300px;text-align:center;">37</span>
<span class="t" style="top:475px;font-size:4.7px;line-height:7px;color:#868686;left:-144.70px;width:300px;text-align:center;">38</span>
<span class="t" style="top:486px;font-size:4.7px;line-height:7px;color:#868686;left:-144.70px;width:300px;text-align:center;">39</span>
<span class="t" style="top:497px;font-size:4.7px;line-height:7px;color:#868686;left:-144.70px;width:300px;text-align:center;">40</span>
<span class="t" style="top:508px;font-size:4.7px;line-height:7px;color:#868686;left:-144.70px;width:300px;text-align:center;">41</span>
<svg style="left:0;top:0" width="12" height="563" viewBox="0 0 12 563"><path d="M0 121.36H9.8M0 131.28H9.8M0 141.19H9.8M0 151.11H9.8M0 161.03H9.8M0 170.95H9.8M0 180.87H9.8M0 190.79H9.8M0 200.71H9.8M0 210.63H9.8M0 220.55H9.8M0 230.47H9.8M0 240.38H9.8M0 250.30H9.8M0 260.22H9.8M0 270.14H9.8M0 280.06H9.8M0 289.98H9.8M0 299.90H9.8M0 309.82H9.8M0 319.74H9.8M0 329.66H9.8M0 339.58H9.8M0 349.49H9.8M0 359.41H9.8M0 369.33H9.8M0 379.25H9.8M0 389.17H9.8M0 399.09H9.8M0 409.01H9.8M0 418.93H9.8M0 428.85H9.8M0 438.76H9.8M0 450.50H9.8M0 460.40H9.8M0 472.50H9.8M0 482.40H9.8M0 492.40H9.8M0 504.40H9.8M0 514.30H9.8" stroke="#5a5a5a" stroke-width=".55" fill="none"/></svg>
<svg style="left:0;top:0" width="1000" height="563" viewBox="0 0 1000 563"><path d="M93.40 111.80V516.30M141.40 111.80V516.30M187.60 111.80V516.30M197.20 111.80V516.30M285.60 111.80V516.30M333.60 111.80V516.30M379.10 111.80V516.30M412.50 111.80V516.30M489.50 111.80V516.30M526.30 111.80V516.30M567.50 111.80V516.30M587.50 111.80V516.30M607.20 111.80V516.30M713.80 111.80V516.30M791.30 111.80V516.30M815.50 111.80V516.30M845.50 111.80V516.30M878.50 111.80V516.30M907.50 111.80V516.30M927.50 111.80V516.30M947.50 111.80V516.30M966.50 111.80V516.30M987.70 111.80V516.30" stroke="#cacaca" stroke-width="0.55" fill="none"/><path d="M9.80 121.50H989.00M9.80 180.50H989.00M9.80 190.50H989.00M9.80 200.50H989.00M9.80 280.50H989.00M9.80 289.50H989.00M9.80 299.50H989.00M9.80 309.50H989.00M9.80 379.50H989.00M9.80 389.50H989.00M9.80 399.50H989.00M9.80 409.50H989.00M9.80 514.50H989.00" stroke="#ededed" stroke-width="1" fill="none"/><path d="M9.80 131.50H989.00M9.80 141.50H989.00M9.80 151.50H989.00M9.80 230.50H989.00M9.80 240.50H989.00M9.80 250.50H989.00M9.80 260.50H989.00M9.80 339.50H989.00M9.80 349.50H989.00M9.80 359.50H989.00M9.80 438.50H989.00M9.80 450.50H989.00M9.80 460.50H989.00M9.80 472.50H989.00M9.80 482.50H989.00" stroke="#dbdbdb" stroke-width="1" fill="none"/><path d="M9.80 161.50H989.00M9.80 170.50H989.00M9.80 210.50H989.00M9.80 220.50H989.00M9.80 270.50H989.00M9.80 319.50H989.00M9.80 329.50H989.00M9.80 369.50H989.00M9.80 418.50H989.00M9.80 428.50H989.00M9.80 492.50H989.00M9.80 504.50H989.00" stroke="#e4e4e4" stroke-width="1" fill="none"/></svg>
<div style="left:607.60px;top:111.84px;width:105.80px;height:19.04px;background:#fff;"></div>
<div style="left:714.20px;top:111.84px;width:76.70px;height:19.04px;background:#fff;"></div>
<div style="left:607.20px;top:130.88px;width:184.10px;height:139.27px;background:#ff99ff;"></div>
<div style="left:607.20px;top:289.58px;width:184.10px;height:10.12px;background:#ffff00;"></div>
<div style="left:607.20px;top:309.42px;width:184.10px;height:10.12px;background:#ffc000;"></div>
<div style="left:10.20px;top:111.84px;width:368.50px;height:9.12px;background:#fff;"></div>
<div style="left:412.90px;top:111.84px;width:154.20px;height:9.12px;background:#fff;"></div>
<span class="t k" style="top:123px;font-size:6.6px;line-height:9px;color:#000;left:11.50px;">Шумахер</span>
<span class="t k" style="top:123px;font-size:6.6px;line-height:9px;color:#000;right:859.90px;">24.ноя</span>
<span class="t k" style="top:123px;font-size:6.6px;line-height:9px;color:#000;right:814.20px;">500</span>
<span class="t k" style="top:133px;font-size:6.6px;line-height:9px;color:#000;left:11.50px;">СветаК</span>
<span class="t k" style="top:133px;font-size:6.6px;line-height:9px;color:#000;right:859.90px;">24.ноя</span>
<span class="t k" style="top:133px;font-size:6.6px;line-height:9px;color:#000;right:814.20px;">1 000</span>
<span class="t k" style="top:143px;font-size:6.6px;line-height:9px;color:#000;left:11.50px;">Ольга Ос</span>
<span class="t k" style="top:143px;font-size:6.6px;line-height:9px;color:#000;right:859.90px;">25.ноя</span>
<span class="t k" style="top:143px;font-size:6.6px;line-height:9px;color:#000;right:814.20px;">5000</span>
<span class="t k" style="top:153px;font-size:6.6px;line-height:9px;color:#000;left:11.50px;">Печатный экспресс</span>
<span class="t k" style="top:153px;font-size:6.6px;line-height:9px;color:#000;right:859.90px;">26.ноя</span>
<span class="t k" style="top:153px;font-size:6.6px;line-height:9px;color:#000;right:814.20px;">3000</span>
<span class="t k" style="top:162px;font-size:6.6px;line-height:9px;color:#000;left:11.50px;">Виктория</span>
<span class="t k" style="top:162px;font-size:6.6px;line-height:9px;color:#000;right:859.90px;">27.ноя</span>
<span class="t k" style="top:162px;font-size:6.6px;line-height:9px;color:#000;right:814.20px;">2300</span>
<span class="t k" style="top:172px;font-size:6.6px;line-height:9px;color:#000;left:11.50px;">Печатный экспресс</span>
<span class="t k" style="top:172px;font-size:6.6px;line-height:9px;color:#000;right:859.90px;">27.ноя</span>
<span class="t k" style="top:172px;font-size:6.6px;line-height:9px;color:#000;right:814.20px;">2000</span>
<span class="t k" style="top:182px;font-size:6.6px;line-height:9px;color:#000;left:11.50px;">Oliviya</span>
<span class="t k" style="top:182px;font-size:6.6px;line-height:9px;color:#000;right:859.90px;">27.ноя</span>
<span class="t k" style="top:182px;font-size:6.6px;line-height:9px;color:#000;right:814.20px;">1000</span>
<span class="t k" style="top:192px;font-size:6.6px;line-height:9px;color:#000;left:11.50px;">Виктория</span>
<span class="t k" style="top:192px;font-size:6.6px;line-height:9px;color:#000;right:859.90px;">28.ноя</span>
<span class="t k" style="top:192px;font-size:6.6px;line-height:9px;color:#000;right:814.20px;">1200</span>
<span class="t k" style="top:202px;font-size:6.6px;line-height:9px;color:#000;left:11.50px;">Виктория</span>
<span class="t k" style="top:202px;font-size:6.6px;line-height:9px;color:#000;right:859.90px;">29.ноя</span>
<span class="t k" style="top:202px;font-size:6.6px;line-height:9px;color:#000;right:814.20px;">1500</span>
<span class="t k" style="top:212px;font-size:6.6px;line-height:9px;color:#000;left:11.50px;">Oxigl</span>
<span class="t k" style="top:212px;font-size:6.6px;line-height:9px;color:#000;right:859.90px;">30.ноя</span>
<span class="t k" style="top:212px;font-size:6.6px;line-height:9px;color:#000;right:814.20px;">600</span>
<span class="t k" style="top:222px;font-size:6.6px;line-height:9px;color:#000;left:11.50px;">Виктория</span>
<span class="t k" style="top:222px;font-size:6.6px;line-height:9px;color:#000;right:859.90px;">30.ноя</span>
<span class="t k" style="top:222px;font-size:6.6px;line-height:9px;color:#000;right:814.20px;">1500</span>
<span class="t k" style="top:232px;font-size:6.6px;line-height:9px;color:#000;left:11.50px;">Ольга Ос</span>
<span class="t k" style="top:232px;font-size:6.6px;line-height:9px;color:#000;right:859.90px;">30.ноя</span>
<span class="t k" style="top:232px;font-size:6.6px;line-height:9px;color:#000;right:814.20px;">5000</span>
<span class="t k" style="top:242px;font-size:6.6px;line-height:9px;color:#000;left:11.50px;">Из темы пенсионеров</span>
<span class="t k" style="top:242px;font-size:6.6px;line-height:9px;color:#000;right:859.90px;">01.дек</span>
<span class="t k" style="top:242px;font-size:6.6px;line-height:9px;color:#000;right:814.20px;">850</span>
<span class="t k" style="top:252px;font-size:6.6px;line-height:9px;color:#000;left:11.50px;">Uygra</span>
<span class="t k" style="top:252px;font-size:6.6px;line-height:9px;color:#000;right:859.90px;">02.дек</span>
<span class="t k" style="top:252px;font-size:6.6px;line-height:9px;color:#000;right:814.20px;">1000</span>
<span class="t k" style="top:262px;font-size:6.6px;line-height:9px;color:#000;left:11.50px;">Лабрадор.ру</span>
<span class="t k" style="top:262px;font-size:6.6px;line-height:9px;color:#000;right:859.90px;">04.дек</span>
<span class="t k" style="top:262px;font-size:6.6px;line-height:9px;color:#000;right:814.20px;">1000</span>
<span class="t k" style="top:271px;font-size:6.6px;line-height:9px;color:#000;left:11.50px;">Виктория</span>
<span class="t k" style="top:271px;font-size:6.6px;line-height:9px;color:#000;right:859.90px;">05.дек</span>
<span class="t k" style="top:271px;font-size:6.6px;line-height:9px;color:#000;right:814.20px;">800</span>
<span class="t k" style="top:281px;font-size:6.6px;line-height:9px;color:#000;left:11.50px;">Маруся</span>
<span class="t k" style="top:281px;font-size:6.6px;line-height:9px;color:#000;right:859.90px;">06.дек</span>
<span class="t k" style="top:281px;font-size:6.6px;line-height:9px;color:#000;right:814.20px;">1 000</span>
<span class="t k" style="top:291px;font-size:6.6px;line-height:9px;color:#000;left:11.50px;">Mary Star</span>
<span class="t k" style="top:291px;font-size:6.6px;line-height:9px;color:#000;right:859.90px;">09.дек</span>
<span class="t k" style="top:291px;font-size:6.6px;line-height:9px;color:#000;right:814.20px;">500</span>
<span class="t k" style="top:301px;font-size:6.6px;line-height:9px;color:#000;left:11.50px;">Светлана-и-Грей</span>
<span class="t k" style="top:301px;font-size:6.6px;line-height:9px;color:#000;right:859.90px;">10.дек</span>
<span class="t k" style="top:301px;font-size:6.6px;line-height:9px;color:#000;right:814.20px;">1000</span>
<span class="t k" style="top:311px;font-size:6.6px;line-height:9px;color:#000;left:11.50px;">СветаК</span>
<span class="t k" style="top:311px;font-size:6.6px;line-height:9px;color:#000;right:859.90px;">10.дек</span>
<span class="t k" style="top:311px;font-size:6.6px;line-height:9px;color:#000;right:814.20px;">1000</span>
<span class="t k" style="top:321px;font-size:6.6px;line-height:9px;color:#000;left:11.50px;">Печатный Экспресс</span>
<span class="t k" style="top:321px;font-size:6.6px;line-height:9px;color:#000;right:859.90px;">10.дек</span>
<span class="t k" style="top:321px;font-size:6.6px;line-height:9px;color:#000;right:814.20px;">2000</span>
<span class="t k" style="top:331px;font-size:6.6px;line-height:9px;color:#000;left:11.50px;">Лариса</span>
<span class="t k" style="top:331px;font-size:6.6px;line-height:9px;color:#000;right:859.90px;">10.дек</span>
<span class="t k" style="top:331px;font-size:6.6px;line-height:9px;color:#000;right:814.20px;">1000</span>
<span class="t k" style="top:341px;font-size:6.6px;line-height:9px;color:#000;left:11.50px;">Анастасия</span>
<span class="t k" style="top:341px;font-size:6.6px;line-height:9px;color:#000;right:859.90px;">10.дек</span>
<span class="t k" style="top:341px;font-size:6.6px;line-height:9px;color:#000;right:814.20px;">1000</span>
<span class="t k" style="top:351px;font-size:6.6px;line-height:9px;color:#000;left:11.50px;">Ольга</span>
<span class="t k" style="top:351px;font-size:6.6px;line-height:9px;color:#000;right:859.90px;">10.дек</span>
<span class="t k" style="top:351px;font-size:6.6px;line-height:9px;color:#000;right:814.20px;">1000</span>
<span class="t k" style="top:361px;font-size:6.6px;line-height:9px;color:#000;left:11.50px;">Белла</span>
<span class="t k" style="top:361px;font-size:6.6px;line-height:9px;color:#000;right:859.90px;">11.дек</span>
<span class="t k" style="top:361px;font-size:6.6px;line-height:9px;color:#000;right:814.20px;">1000</span>
<span class="t k" style="top:370px;font-size:6.6px;line-height:9px;color:#000;left:11.50px;">Виктория</span>
<span class="t k" style="top:370px;font-size:6.6px;line-height:9px;color:#000;right:859.90px;">11.дек</span>
<span class="t k" style="top:370px;font-size:6.6px;line-height:9px;color:#000;right:814.20px;">1500</span>
<span class="t k" style="top:380px;font-size:6.6px;line-height:9px;color:#000;left:11.50px;">Виктория</span>
<span class="t k" style="top:380px;font-size:6.6px;line-height:9px;color:#000;right:859.90px;">12.дек</span>
<span class="t k" style="top:380px;font-size:6.6px;line-height:9px;color:#000;right:814.20px;">500</span>
<span class="t k" style="top:390px;font-size:6.6px;line-height:9px;color:#000;left:11.50px;">Виктория</span>
<span class="t k" style="top:390px;font-size:6.6px;line-height:9px;color:#000;right:859.90px;">15.ноя</span>
<span class="t k" style="top:390px;font-size:6.6px;line-height:9px;color:#000;right:814.20px;">3000</span>
<span class="t k" style="top:400px;font-size:6.6px;line-height:9px;color:#000;left:11.50px;">Виктория</span>
<span class="t k" style="top:400px;font-size:6.6px;line-height:9px;color:#000;right:859.90px;">18.дек</span>
<span class="t k" style="top:400px;font-size:6.6px;line-height:9px;color:#000;right:814.20px;">500</span>
<span class="t k" style="top:410px;font-size:6.6px;line-height:9px;color:#000;left:11.50px;">Елена Конор</span>
<span class="t k" style="top:410px;font-size:6.6px;line-height:9px;color:#000;right:859.90px;">18.дек</span>
<span class="t k" style="top:410px;font-size:6.6px;line-height:9px;color:#000;right:814.20px;">2000</span>
<span class="t k" style="top:420px;font-size:6.6px;line-height:9px;color:#000;left:11.50px;">Юлия</span>
<span class="t k" style="top:420px;font-size:6.6px;line-height:9px;color:#000;right:859.90px;">18.дек</span>
<span class="t k" style="top:420px;font-size:6.6px;line-height:9px;color:#000;right:814.20px;">500</span>
<span class="t k" style="top:430px;font-size:6.6px;line-height:9px;color:#000;left:11.50px;">СветаК</span>
<span class="t k" style="top:430px;font-size:6.6px;line-height:9px;color:#000;right:859.90px;">20.дек</span>
<span class="t k" style="top:430px;font-size:6.6px;line-height:9px;color:#000;right:814.20px;">1000</span>
<span class="t k" style="top:441px;font-size:6.6px;line-height:9px;color:#000;left:11.50px;">Виктория</span>
<span class="t k" style="top:441px;font-size:6.6px;line-height:9px;color:#000;right:859.90px;">20.дек</span>
<span class="t k" style="top:441px;font-size:6.6px;line-height:9px;color:#000;right:814.20px;">1000</span>
<span class="t k" style="top:452px;font-size:6.6px;line-height:9px;color:#000;left:11.50px;">Елена Андреевна</span>
<span class="t k" style="top:452px;font-size:6.6px;line-height:9px;color:#000;right:859.90px;">20.дек</span>
<span class="t k" style="top:452px;font-size:6.6px;line-height:9px;color:#000;right:814.20px;">650</span>
<span class="t k" style="top:463px;font-size:6.6px;line-height:9px;color:#000;left:11.50px;">Анна Валерьевна</span>
<span class="t k" style="top:463px;font-size:6.6px;line-height:9px;color:#000;right:859.90px;">19.дек</span>
<span class="t k" style="top:463px;font-size:6.6px;line-height:9px;color:#000;right:814.20px;">500</span>
<span class="t k" style="top:473px;font-size:6.6px;line-height:9px;color:#000;left:11.50px;">Астамур Русланович</span>
<span class="t k" style="top:473px;font-size:6.6px;line-height:9px;color:#000;right:859.90px;">20.дек</span>
<span class="t k" style="top:473px;font-size:6.6px;line-height:9px;color:#000;right:814.20px;">500</span>
<span class="t k" style="top:484px;font-size:6.6px;line-height:9px;color:#000;left:11.50px;">Uygra</span>
<span class="t k" style="top:484px;font-size:6.6px;line-height:9px;color:#000;right:859.90px;">20.дек</span>
<span class="t k" style="top:484px;font-size:6.6px;line-height:9px;color:#000;right:814.20px;">3000</span>
<span class="t k" style="top:494px;font-size:6.6px;line-height:9px;color:#000;left:11.50px;">Лариса</span>
<span class="t k" style="top:494px;font-size:6.6px;line-height:9px;color:#000;right:859.90px;">20.дек</span>
<span class="t k" style="top:494px;font-size:6.6px;line-height:9px;color:#000;right:814.20px;">1000</span>
<span class="t k" style="top:123px;font-size:6.6px;line-height:9px;color:#000;left:198.90px;">alcor17</span>
<span class="t k" style="top:123px;font-size:6.6px;line-height:9px;color:#000;right:668.20px;">20.дек</span>
<span class="t k" style="top:123px;font-size:6.6px;line-height:9px;color:#000;right:622.60px;">1000</span>
<span class="t k" style="top:133px;font-size:6.6px;line-height:9px;color:#000;left:198.90px;">Оксана</span>
<span class="t k" style="top:133px;font-size:6.6px;line-height:9px;color:#000;right:668.20px;">21.дек</span>
<span class="t k" style="top:133px;font-size:6.6px;line-height:9px;color:#000;right:622.60px;">1000</span>
<span class="t k" style="top:143px;font-size:6.6px;line-height:9px;color:#000;left:198.90px;">wina</span>
<span class="t k" style="top:143px;font-size:6.6px;line-height:9px;color:#000;right:668.20px;">22.дек</span>
<span class="t k" style="top:143px;font-size:6.6px;line-height:9px;color:#000;right:622.60px;">3000</span>
<span class="t k" style="top:153px;font-size:6.6px;line-height:9px;color:#000;left:198.90px;">Виктория</span>
<span class="t k" style="top:153px;font-size:6.6px;line-height:9px;color:#000;right:668.20px;">23.дек</span>
<span class="t k" style="top:153px;font-size:6.6px;line-height:9px;color:#000;right:622.60px;">3000</span>
<span class="t k" style="top:162px;font-size:6.6px;line-height:9px;color:#000;left:198.90px;">Ольга</span>
<span class="t k" style="top:162px;font-size:6.6px;line-height:9px;color:#000;right:668.20px;">24.дек</span>
<span class="t k" style="top:162px;font-size:6.6px;line-height:9px;color:#000;right:622.60px;">5000</span>
<span class="t k" style="top:172px;font-size:6.6px;line-height:9px;color:#000;left:198.90px;">Uygra</span>
<span class="t k" style="top:172px;font-size:6.6px;line-height:9px;color:#000;right:668.20px;">25.дек</span>
<span class="t k" style="top:172px;font-size:6.6px;line-height:9px;color:#000;right:622.60px;">100</span>
<span class="t k" style="top:182px;font-size:6.6px;line-height:9px;color:#000;left:198.90px;">Диана</span>
<span class="t k" style="top:182px;font-size:6.6px;line-height:9px;color:#000;right:668.20px;">26.дек</span>
<span class="t k" style="top:182px;font-size:6.6px;line-height:9px;color:#000;right:622.60px;">57,27</span>
<span class="t k" style="top:192px;font-size:6.6px;line-height:9px;color:#000;left:198.90px;">Вера&amp;Сильвия</span>
<span class="t k" style="top:192px;font-size:6.6px;line-height:9px;color:#000;right:668.20px;">26.дек</span>
<span class="t k" style="top:192px;font-size:6.6px;line-height:9px;color:#000;right:622.60px;">500</span>
<span class="t k" style="top:202px;font-size:6.6px;line-height:9px;color:#000;left:198.90px;">Uygra</span>
<span class="t k" style="top:202px;font-size:6.6px;line-height:9px;color:#000;right:668.20px;">26.дек</span>
<span class="t k" style="top:202px;font-size:6.6px;line-height:9px;color:#000;right:622.60px;">442,73</span>
<span class="t k" style="top:212px;font-size:6.6px;line-height:9px;color:#000;left:198.90px;">Маруся</span>
<span class="t k" style="top:212px;font-size:6.6px;line-height:9px;color:#000;right:668.20px;">26.дек</span>
<span class="t k" style="top:212px;font-size:6.6px;line-height:9px;color:#000;right:622.60px;">2000</span>
<span class="t k" style="top:222px;font-size:6.6px;line-height:9px;color:#000;left:198.90px;">Анастасия</span>
<span class="t k" style="top:222px;font-size:6.6px;line-height:9px;color:#000;right:668.20px;">26.дек</span>
<span class="t k" style="top:222px;font-size:6.6px;line-height:9px;color:#000;right:622.60px;">1350</span>
<span class="t k" style="top:232px;font-size:6.6px;line-height:9px;color:#000;left:198.90px;">Фонд помощи пенсионеров</span>
<span class="t k" style="top:232px;font-size:6.6px;line-height:9px;color:#000;right:668.20px;">27.дек</span>
<span class="t k" style="top:232px;font-size:6.6px;line-height:9px;color:#000;right:622.60px;">750</span>
<span class="t k" style="top:242px;font-size:6.6px;line-height:9px;color:#000;left:198.90px;">София</span>
<span class="t k" style="top:242px;font-size:6.6px;line-height:9px;color:#000;right:668.20px;">28.дек</span>
<span class="t k" style="top:242px;font-size:6.6px;line-height:9px;color:#000;right:622.60px;">20</span>
<span class="t k" style="top:252px;font-size:6.6px;line-height:9px;color:#000;left:198.90px;">Валерия</span>
<span class="t k" style="top:252px;font-size:6.6px;line-height:9px;color:#000;right:668.20px;">29.дек</span>
<span class="t k" style="top:252px;font-size:6.6px;line-height:9px;color:#000;right:622.60px;">2000</span>
<span class="t k" style="top:262px;font-size:6.6px;line-height:9px;color:#000;left:198.90px;">Эльвира</span>
<span class="t k" style="top:262px;font-size:6.6px;line-height:9px;color:#000;right:668.20px;">05.янв</span>
<span class="t k" style="top:262px;font-size:6.6px;line-height:9px;color:#000;right:622.60px;">1000</span>
<span class="t k" style="top:271px;font-size:6.6px;line-height:9px;color:#000;left:198.90px;">Печатный экспресс</span>
<span class="t k" style="top:271px;font-size:6.6px;line-height:9px;color:#000;right:668.20px;">06.янв</span>
<span class="t k" style="top:271px;font-size:6.6px;line-height:9px;color:#000;right:622.60px;">2000</span>
<span class="t k" style="top:281px;font-size:6.6px;line-height:9px;color:#000;left:198.90px;">Виктория</span>
<span class="t k" style="top:281px;font-size:6.6px;line-height:9px;color:#000;right:668.20px;">14.янв</span>
<span class="t k" style="top:281px;font-size:6.6px;line-height:9px;color:#000;right:622.60px;">1000</span>
<span class="t k" style="top:291px;font-size:6.6px;line-height:9px;color:#000;left:198.90px;">Ольга</span>
<span class="t k" style="top:291px;font-size:6.6px;line-height:9px;color:#000;right:668.20px;">16.янв</span>
<span class="t k" style="top:291px;font-size:6.6px;line-height:9px;color:#000;right:622.60px;">1000</span>
<span class="t k" style="top:301px;font-size:6.6px;line-height:9px;color:#000;left:198.90px;">Uygra</span>
<span class="t k" style="top:301px;font-size:6.6px;line-height:9px;color:#000;right:668.20px;">16.янв</span>
<span class="t k" style="top:301px;font-size:6.6px;line-height:9px;color:#000;right:622.60px;">300</span>
<span class="t k" style="top:311px;font-size:6.6px;line-height:9px;color:#000;left:198.90px;">Виктория</span>
<span class="t k" style="top:311px;font-size:6.6px;line-height:9px;color:#000;right:668.20px;">17.янв</span>
<span class="t k" style="top:311px;font-size:6.6px;line-height:9px;color:#000;right:622.60px;">1000</span>
<span class="t k" style="top:321px;font-size:6.6px;line-height:9px;color:#000;left:198.90px;">Виктория</span>
<span class="t k" style="top:321px;font-size:6.6px;line-height:9px;color:#000;right:668.20px;">06.фев</span>
<span class="t k" style="top:321px;font-size:6.6px;line-height:9px;color:#000;right:622.60px;">500</span>
<span class="t k" style="top:331px;font-size:6.6px;line-height:9px;color:#000;left:198.90px;">Печатный экспресс</span>
<span class="t k" style="top:331px;font-size:6.6px;line-height:9px;color:#000;right:668.20px;">08.фев</span>
<span class="t k" style="top:331px;font-size:6.6px;line-height:9px;color:#000;right:622.60px;">2000</span>
<span class="t k" style="top:341px;font-size:6.6px;line-height:9px;color:#000;left:198.90px;">Виктория</span>
<span class="t k" style="top:341px;font-size:6.6px;line-height:9px;color:#000;right:668.20px;">22.фев</span>
<span class="t k" style="top:341px;font-size:6.6px;line-height:9px;color:#000;right:622.60px;">500</span>
<span class="t k" style="top:351px;font-size:6.6px;line-height:9px;color:#000;left:198.90px;">OlyaOS</span>
<span class="t k" style="top:351px;font-size:6.6px;line-height:9px;color:#000;right:668.20px;">02.мар</span>
<span class="t k" style="top:351px;font-size:6.6px;line-height:9px;color:#000;right:622.60px;">500</span>
<span class="t k" style="top:361px;font-size:6.6px;line-height:9px;color:#000;left:198.90px;">Виктория</span>
<span class="t k" style="top:361px;font-size:6.6px;line-height:9px;color:#000;right:668.20px;">15.мар</span>
<span class="t k" style="top:361px;font-size:6.6px;line-height:9px;color:#000;right:622.60px;">1000</span>
<span class="t k" style="top:370px;font-size:6.6px;line-height:9px;color:#000;left:198.90px;">Печатный экспресс</span>
<span class="t k" style="top:370px;font-size:6.6px;line-height:9px;color:#000;right:668.20px;">26.мар</span>
<span class="t k" style="top:370px;font-size:6.6px;line-height:9px;color:#000;right:622.60px;">2000</span>
<span class="t k" style="top:380px;font-size:6.6px;line-height:9px;color:#000;left:198.90px;">От Герды</span>
<span class="t k" style="top:380px;font-size:6.6px;line-height:9px;color:#000;right:668.20px;">02.апр</span>
<span class="t k" style="top:380px;font-size:6.6px;line-height:9px;color:#000;right:622.60px;">3227,04</span>
<span class="t k" style="top:123px;font-size:6.6px;line-height:9px;color:#000;left:414.20px;">Оплата доставки</span>
<span class="t k" style="top:123px;font-size:6.6px;line-height:9px;color:#000;right:475.50px;">25.ноя</span>
<span class="t k" style="top:123px;font-size:6.6px;line-height:9px;color:#000;right:433.80px;">5 000</span>
<span class="t k" style="top:133px;font-size:6.6px;line-height:9px;color:#000;left:414.20px;">клиника</span>
<span class="t k" style="top:133px;font-size:6.6px;line-height:9px;color:#000;right:475.50px;">27.ноя</span>
<span class="t k" style="top:133px;font-size:6.6px;line-height:9px;color:#000;right:433.80px;">11 000</span>
<span class="t k" style="top:143px;font-size:6.6px;line-height:9px;color:#000;left:414.20px;">Консультация Еремина</span>
<span class="t k" style="top:143px;font-size:6.6px;line-height:9px;color:#000;right:475.50px;">30.ноя</span>
<span class="t k" style="top:143px;font-size:6.6px;line-height:9px;color:#000;right:433.80px;">3500</span>
<span class="t k" style="top:153px;font-size:6.6px;line-height:9px;color:#000;left:414.20px;width:74.70px;overflow:hidden;">Прием Миракова(невролог)</span>
<span class="t k" style="top:153px;font-size:6.6px;line-height:9px;color:#000;right:475.50px;">07.дек</span>
<span class="t k" style="top:153px;font-size:6.6px;line-height:9px;color:#000;right:433.80px;">2000</span>
<span class="t k" style="top:162px;font-size:6.6px;line-height:9px;color:#000;left:414.20px;">Операция</span>
<span class="t k" style="top:162px;font-size:6.6px;line-height:9px;color:#000;right:475.50px;">16.янв</span>
<span class="t k" style="top:162px;font-size:6.6px;line-height:9px;color:#000;right:433.80px;">43540</span>
<span class="t k" style="top:172px;font-size:6.6px;line-height:9px;color:#000;left:414.20px;">Такси</span>
<span class="t k" style="top:172px;font-size:6.6px;line-height:9px;color:#000;right:475.50px;">16.янв</span>
<span class="t k" style="top:172px;font-size:6.6px;line-height:9px;color:#000;right:433.80px;">1135</span>
<span class="t k" style="top:182px;font-size:6.6px;line-height:9px;color:#000;left:414.20px;">Проезд до клиники</span>
<span class="t k" style="top:182px;font-size:6.6px;line-height:9px;color:#000;right:475.50px;">16.янв</span>
<span class="t k" style="top:182px;font-size:6.6px;line-height:9px;color:#000;right:433.80px;">200</span>
<span class="t k" style="top:192px;font-size:6.6px;line-height:9px;color:#000;left:414.20px;">Транексам</span>
<span class="t k" style="top:192px;font-size:6.6px;line-height:9px;color:#000;right:475.50px;">17.янв</span>
<span class="t k" style="top:192px;font-size:6.6px;line-height:9px;color:#000;right:433.80px;">266</span>
<span class="t k" style="top:202px;font-size:6.6px;line-height:9px;color:#000;left:414.20px;">Карнитин</span>
<span class="t k" style="top:202px;font-size:6.6px;line-height:9px;color:#000;right:475.50px;">17.янв</span>
<span class="t k" style="top:202px;font-size:6.6px;line-height:9px;color:#000;right:433.80px;">2804</span>
<span class="t k" style="top:212px;font-size:6.6px;line-height:9px;color:#000;left:414.20px;">BCAA</span>
<span class="t k" style="top:212px;font-size:6.6px;line-height:9px;color:#000;right:475.50px;">15.мар</span>
<span class="t k" style="top:212px;font-size:6.6px;line-height:9px;color:#000;right:433.80px;">3784</span>
<svg style="left:0;top:0" width="1000" height="563" viewBox="0 0 1000 563"><path d="M9.80 121.50H188.12M9.80 180.50H188.12M9.80 190.50H188.12M9.80 200.50H188.12M9.80 280.50H188.12M9.80 289.50H188.12M9.80 299.50H188.12M9.80 309.50H188.12M9.80 379.50H188.12M9.80 389.50H188.12M9.80 399.50H188.12M9.80 409.50H188.12M197.20 121.50H379.10M197.20 180.50H379.10M197.20 190.50H379.10M197.20 200.50H379.10M197.20 280.50H379.10M197.20 289.50H379.10M197.20 299.50H379.10M197.20 309.50H379.10M197.20 379.50H379.10M197.20 389.50H379.10M412.50 121.50H567.50M412.50 180.50H567.50M412.50 190.50H567.50M412.50 200.50H567.50" stroke="#7c7c7c" stroke-width="1" fill="none"/><path d="M9.80 131.50H188.12M9.80 141.50H188.12M9.80 151.50H188.12M9.80 230.50H188.12M9.80 240.50H188.12M9.80 250.50H188.12M9.80 260.50H188.12M9.80 339.50H188.12M9.80 349.50H188.12M9.80 359.50H188.12M9.80 438.50H188.12M9.80 450.50H188.12M9.80 460.50H188.12M9.80 472.50H188.12M9.80 482.50H188.12M197.20 131.50H379.10M197.20 141.50H379.10M197.20 151.50H379.10M197.20 230.50H379.10M197.20 240.50H379.10M197.20 250.50H379.10M197.20 260.50H379.10M197.20 339.50H379.10M197.20 349.50H379.10M197.20 359.50H379.10M412.50 131.50H567.50M412.50 141.50H567.50M412.50 151.50H567.50" stroke="#000000" stroke-width="1" fill="none"/><path d="M9.80 161.50H188.12M9.80 170.50H188.12M9.80 210.50H188.12M9.80 220.50H188.12M9.80 270.50H188.12M9.80 319.50H188.12M9.80 329.50H188.12M9.80 369.50H188.12M9.80 418.50H188.12M9.80 428.50H188.12M9.80 492.50H188.12M9.80 504.50H188.12M197.20 161.50H379.10M197.20 170.50H379.10M197.20 210.50H379.10M197.20 220.50H379.10M197.20 270.50H379.10M197.20 319.50H379.10M197.20 329.50H379.10M197.20 369.50H379.10M412.50 161.50H567.50M412.50 170.50H567.50M412.50 210.50H567.50M412.50 220.50H567.50" stroke="#3c3c3c" stroke-width="1" fill="none"/><path d="M93.40 121.00V505.00M141.40 121.00V505.00M187.60 121.00V505.00" stroke="#000" stroke-width="1.05" fill="none"/><path d="M197.20 121.00V390.00M285.60 121.00V390.00M333.60 121.00V390.00M567.50 111.00V221.00" stroke="#333" stroke-width="0.55" fill="none"/><path d="M379.10 121.00V390.00" stroke="#777" stroke-width="0.5" fill="none"/><path d="M412.50 111.50H567.50" stroke="#8a8a8a" stroke-width="1" fill="none"/><path d="M412.50 111.00V221.00" stroke="#222" stroke-width="0.6" fill="none"/><path d="M489.50 121.00V221.00M526.30 121.00V221.00" stroke="#111" stroke-width="1.0" fill="none"/></svg>
<span class="t" style="top:113px;font-size:6.6px;line-height:9px;color:#000;font-weight:700;left:44.05px;width:300px;text-align:center;">Разовые приходы</span>
<span class="t" style="top:113px;font-size:6.6px;line-height:9px;color:#000;font-weight:700;left:340.00px;width:300px;text-align:center;">Расходы</span>
<span class="t" style="top:442px;font-size:6.87px;line-height:9px;color:#000;font-weight:700;font-family:'DejaVu Sans',sans-serif;left:198.90px;">Перевели Блейду</span>
<span class="t" style="top:442px;font-size:6.64px;line-height:9px;color:#000;font-weight:700;font-family:'DejaVu Sans',sans-serif;right:669.00px;">11.01.2025</span>
<span class="t" style="top:442px;font-size:6.6px;line-height:9px;color:#000;font-weight:700;font-family:'DejaVu Sans',sans-serif;right:623.00px;">5120</span>
<span class="t" style="top:462px;font-size:8.2px;line-height:11px;color:#000;font-weight:700;letter-spacing:-0.271px;left:199.40px;">ИТОГО</span>
<span class="t" style="top:462px;font-size:8.2px;line-height:11px;color:#000;font-weight:700;right:623.00px;">84 527</span>
<span class="t" style="top:494px;font-size:8.2px;line-height:11px;color:#000;font-weight:700;letter-spacing:-0.502px;left:199.40px;">ВСЕГО:</span>
<span class="t" style="top:494px;font-size:8.4px;line-height:11px;color:#000;font-weight:700;right:623.00px;">11 298,04</span>
<span class="t" style="top:440px;font-size:8.2px;line-height:11px;color:#000;font-weight:700;letter-spacing:-0.231px;left:415.20px;">ИТОГО</span>
<span class="t" style="top:440px;font-size:8.27px;line-height:11px;color:#000;font-weight:700;right:434.00px;">73 229,00</span>
<span class="t" style="top:114px;font-size:13.0px;line-height:17px;color:#000;font-weight:700;right:288.70px;">Дата отчета:</span>
<span class="t" style="top:114px;font-size:13.8px;line-height:18px;color:#000;left:719.40px;">02.04.2025</span>
<span class="t" style="top:133px;font-size:6.6px;line-height:9px;color:#000;font-weight:700;left:549.25px;width:300px;text-align:center;">Текущее состояние</span>
<span class="t k" style="top:143px;font-size:6.7px;line-height:9px;color:#161016;left:608.90px;white-space:pre;">корм</span>
<span class="t k" style="top:143px;font-size:6.3px;line-height:9px;color:#161016;left:715.50px;white-space:pre;">до 24.04.2025</span>
<span class="t k" style="top:153px;font-size:6.7px;line-height:9px;color:#161016;left:608.90px;white-space:pre;">вакцина</span>
<span class="t k" style="top:153px;font-size:6.3px;line-height:9px;color:#161016;left:715.50px;white-space:pre;"> -</span>
<span class="t k" style="top:162px;font-size:6.7px;line-height:9px;color:#161016;left:608.90px;white-space:pre;">обработка от клещей</span>
<span class="t k" style="top:162px;font-size:6.3px;line-height:9px;color:#161016;left:715.50px;white-space:pre;">наша до  2030</span>
<span class="t k" style="top:172px;font-size:6.7px;line-height:9px;color:#161016;left:608.90px;white-space:pre;">противоглистные</span>
<span class="t k" style="top:172px;font-size:6.3px;line-height:9px;color:#161016;left:715.50px;white-space:pre;">наша до  2026</span>
<span class="t k" style="top:182px;font-size:6.7px;line-height:9px;color:#161016;left:608.90px;white-space:pre;">габапентин</span>
<span class="t k" style="top:182px;font-size:6.3px;line-height:9px;color:#161016;left:715.50px;white-space:pre;">21.02.2028</span>
<span class="t k" style="top:192px;font-size:6.7px;line-height:9px;color:#161016;left:608.90px;white-space:pre;">шампуни</span>
<span class="t k" style="top:192px;font-size:6.3px;line-height:9px;color:#161016;left:715.50px;white-space:pre;">до конца 2027</span>
<span class="t k" style="top:202px;font-size:6.7px;line-height:9px;color:#161016;left:608.90px;white-space:pre;">одноразовые пояса и прокладки</span>
<span class="t k" style="top:202px;font-size:6.3px;line-height:9px;color:#161016;left:715.50px;white-space:pre;">до конца 2025</span>
<span class="t k" style="top:212px;font-size:6.7px;line-height:9px;color:#161016;left:608.90px;white-space:pre;">Карнитин</span>
<span class="t k" style="top:212px;font-size:6.3px;line-height:9px;color:#161016;left:715.50px;white-space:pre;">08.07.2025</span>
<span class="t k" style="top:222px;font-size:6.7px;line-height:9px;color:#161016;left:608.90px;white-space:pre;">шприцы 5 мл</span>
<span class="t k" style="top:222px;font-size:6.3px;line-height:9px;color:#161016;left:715.50px;white-space:pre;">62</span>
<span class="t k" style="top:232px;font-size:6.7px;line-height:9px;color:#161016;left:608.90px;white-space:pre;">шприцы 50 мл</span>
<span class="t k" style="top:232px;font-size:6.3px;line-height:9px;color:#161016;left:715.50px;white-space:pre;">15</span>
<span class="t k" style="top:242px;font-size:6.7px;line-height:9px;color:#161016;left:608.90px;white-space:pre;">шприцы 20 мл</span>
<span class="t k" style="top:242px;font-size:6.3px;line-height:9px;color:#161016;left:715.50px;white-space:pre;">51</span>
<span class="t k" style="top:252px;font-size:6.7px;line-height:9px;color:#5a1a5a;left:608.90px;white-space:pre;">кортексин</span>
<span class="t k" style="top:252px;font-size:6.3px;line-height:9px;color:#5a1a5a;left:715.50px;white-space:pre;">на 5 курсов</span>
<span class="t k" style="top:262px;font-size:6.7px;line-height:9px;color:#5a1a5a;left:608.90px;white-space:pre;">витамины</span>
<span class="t k" style="top:262px;font-size:6.3px;line-height:9px;color:#5a1a5a;left:715.50px;white-space:pre;">на 3 курса</span>
<svg style="left:714.10px;top:220.55px" width="3" height="3" viewBox="0 0 3 3"><path d="M0 0 H2.2 L0 2.2z" fill="#1e7a3c"/></svg>
<svg style="left:714.10px;top:230.47px" width="3" height="3" viewBox="0 0 3 3"><path d="M0 0 H2.2 L0 2.2z" fill="#1e7a3c"/></svg>
<svg style="left:714.10px;top:240.38px" width="3" height="3" viewBox="0 0 3 3"><path d="M0 0 H2.2 L0 2.2z" fill="#1e7a3c"/></svg>
<span class="t k" style="top:291px;font-size:6.4px;line-height:9px;color:#2a2a00;letter-spacing:0.033px;left:609.00px;">паглюферал2 от Герды</span>
<span class="t k" style="top:292px;font-size:6.0px;line-height:8px;color:#2a2a00;letter-spacing:0.255px;left:715.00px;">65 коробок</span>
<span class="t k" style="top:311px;font-size:6.7px;line-height:9px;color:#2a1c00;left:608.90px;">Средний расход в месяц</span>
<span class="t k" style="top:311px;font-size:6.6px;line-height:9px;color:#2a1c00;right:210.00px;">14645,8</span>
<span class="t" style="top:146px;font-size:4.2px;line-height:6px;color:#8a7a4a;letter-spacing:0.079px;left:793.00px;">14 дней от Герды</span>
<span class="t" style="top:185px;font-size:4.2px;line-height:6px;color:#9a7a3a;letter-spacing:0.098px;left:793.00px;">1088 капсул от Герды</span>
<div style="left:606.60px;top:378.45px;width:108.00px;height:11.12px;border:1.1px solid #217346;box-sizing:border-box;"></div>
<div style="left:712.60px;top:387.77px;width:3.00px;height:3.00px;background:#fff;"></div>
<div style="left:713.40px;top:388.57px;width:1.80px;height:1.80px;background:#217346;"></div>
<div style="left:990.80px;top:124.00px;width:7.40px;height:384.50px;background:#0a0a0a;"></div>
<div style="left:990.40px;top:107.00px;width:8.20px;height:7.40px;background:#3a3a3a;box-shadow:inset 0 0 0 .5px #5a5a5a;"></div>
<svg style="left:992px;top:108.6px" width="5" height="4" viewBox="0 0 5 4"><path d="M.4 3.4 L2.5 .6 L4.6 3.4z" fill="#eee"/></svg>
<div style="left:990.40px;top:114.90px;width:8.20px;height:8.60px;background:#3a3a3a;box-shadow:inset 0 0 0 .5px #505050;"></div>
<div style="left:990.40px;top:508.50px;width:8.20px;height:8.00px;background:#3a3a3a;box-shadow:inset 0 0 0 .5px #5a5a5a;"></div>
<svg style="left:992px;top:510.8px" width="5" height="4" viewBox="0 0 5 4"><path d="M.4 .6 L2.5 3.4 L4.6 .6z" fill="#eee"/></svg>
<svg style="left:10.6px;top:520px" width="12" height="6" viewBox="0 0 12 6"><path d="M6 .8 L3.6 3 L6 5.2z" fill="#8a8a8a"/></svg>
<svg style="left:24px;top:520px" width="12" height="6" viewBox="0 0 12 6"><path d="M5 .8 L7.4 3 L5 5.2z" fill="#c8c8c8"/></svg>
<div style="left:52.40px;top:516.00px;width:38.60px;height:13.30px;background:#ffffff;border-bottom:1.3px solid #217346;box-sizing:border-box;"></div>
<span class="t" style="top:518px;font-size:6.3px;line-height:9px;color:#217346;font-weight:700;letter-spacing:0.099px;left:59.00px;">Шерхан</span>
<span class="t" style="top:518px;font-size:6.3px;line-height:9px;color:#e6e6e6;letter-spacing:0.114px;left:98.00px;">Герда</span>
<span class="t" style="top:518px;font-size:6.3px;line-height:9px;color:#e6e6e6;letter-spacing:0.133px;left:129.00px;">Азалия</span>
<span class="t" style="top:518px;font-size:6.3px;line-height:9px;color:#e6e6e6;letter-spacing:0.506px;left:165.00px;">Шерлок</span>
<span class="t" style="top:518px;font-size:6.3px;line-height:9px;color:#e6e6e6;letter-spacing:0.116px;left:204.40px;">Ак</span>
<span class="t" style="top:518px;font-size:6.3px;line-height:9px;color:#e6e6e6;letter-spacing:0.043px;left:225.00px;">Лист2</span>
<span class="t" style="top:518px;font-size:6.3px;line-height:9px;color:#e6e6e6;letter-spacing:0.163px;left:256.00px;">Лист3</span>
<span class="t" style="top:518px;font-size:6.3px;line-height:9px;color:#e6e6e6;letter-spacing:0.206px;left:288.40px;">все закупки</span>
<div style="left:122.10px;top:518.60px;width:0.60px;height:9.00px;background:#5a5a5a;"></div>
<div style="left:158.30px;top:518.60px;width:0.60px;height:9.00px;background:#5a5a5a;"></div>
<div style="left:197.30px;top:518.60px;width:0.60px;height:9.00px;background:#5a5a5a;"></div>
<div style="left:218.30px;top:518.60px;width:0.60px;height:9.00px;background:#5a5a5a;"></div>
<div style="left:249.10px;top:518.60px;width:0.60px;height:9.00px;background:#5a5a5a;"></div>
<div style="left:332.30px;top:518.60px;width:0.60px;height:9.00px;background:#5a5a5a;"></div>
<div style="left:280.80px;top:518.60px;width:0.60px;height:9.00px;background:#3a3a3a;"></div>
<svg style="left:348.4px;top:518.4px" width="10" height="10" viewBox="0 0 10 10"><circle cx="5" cy="5" r="3.700" fill="none" stroke="#eee" stroke-width=".8"/><path d="M5 2.800 v4.400 M2.800 5 h4.400" stroke="#eee" stroke-width=".8"/></svg>
<div style="left:600.00px;top:521.20px;width:0.90px;height:0.90px;background:#ddd;border-radius:50%;"></div>
<div style="left:600.00px;top:523.40px;width:0.90px;height:0.90px;background:#ddd;border-radius:50%;"></div>
<div style="left:600.00px;top:525.60px;width:0.90px;height:0.90px;background:#ddd;border-radius:50%;"></div>
<div style="left:609.00px;top:520.00px;width:8.00px;height:7.60px;background:#3a3a3a;box-shadow:inset 0 0 0 .5px #5a5a5a;"></div>
<svg style="left:610.6px;top:520.8px" width="5" height="6" viewBox="0 0 5 6"><path d="M3.800 .6 L.8 3 L3.800 5.400z" fill="#eee"/></svg>
<div style="left:617.50px;top:520.00px;width:347.00px;height:7.60px;background:#3a3a3a;box-shadow:inset 0 0 0 .5px #505050;"></div>
<div style="left:964.50px;top:520.00px;width:16.40px;height:7.60px;background:#0a0a0a;"></div>
<div style="left:981.00px;top:520.00px;width:8.00px;height:7.60px;background:#3a3a3a;box-shadow:inset 0 0 0 .5px #5a5a5a;"></div>
<svg style="left:982.6px;top:520.800px" width="5" height="6" viewBox="0 0 5 6"><path d="M1.200 .6 L4.200 3 L1.200 5.400z" fill="#eee"/></svg>
<span class="t" style="top:532px;font-size:5.9px;line-height:8px;color:#e6e6e6;letter-spacing:0.199px;left:5.60px;">Готово</span>
<svg style="left:34.600px;top:531.400px" width="10" height="10" viewBox="0 0 10 10"><circle cx="3.200" cy="2.200" r="1" fill="#eee"/><path d="M1 4 h4.400 M3.200 4 v2.400 M3.200 6.200 l-1.600 2.400 M3.200 6.200 l1.400 1.600" stroke="#eee" stroke-width=".8" fill="none"/><circle cx="6.800" cy="6.800" r="2" fill="none" stroke="#eee" stroke-width=".7"/><path d="M6 6.800 l.6 .7 l1-1.200" stroke="#eee" stroke-width=".5" fill="none"/></svg>
<span class="t" style="top:532px;font-size:6.0px;line-height:8px;color:#f4f4f4;font-weight:700;letter-spacing:-0.124px;left:45.00px;">Специальные возможности: проверьте рекомендации</span>
<div style="left:845.50px;top:531.00px;width:20.50px;height:10.40px;background:#4a4a4a;"></div>
<svg style="left:851.5px;top:532.3px" width="9" height="8" viewBox="0 0 9 8"><rect x=".5" y=".5" width="7.4" height="6.6" fill="none" stroke="#eee" stroke-width=".7"/><path d="M3 .5 v6.600 M5.400 .5 v6.600" stroke="#eee" stroke-width=".9"/></svg>
<svg style="left:872px;top:532.3px" width="9" height="8" viewBox="0 0 9 8"><path d="M1 .6 v6.400 h6.600 v-6.400" fill="none" stroke="#ddd" stroke-width=".7"/><path d="M3 2 v5 M5.400 2 v5" stroke="#aaa" stroke-width=".7"/></svg>
<svg style="left:893px;top:532px" width="9" height="9" viewBox="0 0 9 9"><rect x=".6" y=".8" width="7" height="7" fill="none" stroke="#ddd" stroke-width=".7"/><rect x="1.600" y=".8" width="3.600" height="3.600" fill="#eee"/></svg>
<div style="left:910.50px;top:536.10px;width:3.60px;height:0.70px;background:#bbb;"></div>
<div style="left:918.00px;top:536.10px;width:52.00px;height:0.70px;background:#bbb;"></div>
<div style="left:932.00px;top:533.60px;width:2.20px;height:6.00px;background:#efefef;"></div>
<div style="left:972.30px;top:536.10px;width:4.40px;height:0.70px;background:#bbb;"></div>
<div style="left:974.20px;top:534.20px;width:0.70px;height:4.40px;background:#bbb;"></div>
<span class="t" style="top:533px;font-size:5.8px;line-height:8px;color:#e6e6e6;letter-spacing:-0.130px;left:983.10px;">60 %</span>
<svg style="left:7.5px;top:548px" width="10" height="10" viewBox="0 0 10 10"><path d="M0 1.3 L4.2 .7 V4.6 H0z M4.8 .6 L9.6 0 V4.6 H4.8z M0 5.2 H4.2 V9.2 L0 8.6z M4.8 5.2 H9.6 V9.9 L4.8 9.3z" fill="#fff"/></svg>
<div style="left:25.50px;top:543.00px;width:150.00px;height:20.00px;background:#2b2b2b;box-shadow:inset 0 0 0 .5px #5a5a5a;"></div>
<svg style="left:30px;top:546.5px" width="12" height="12" viewBox="0 0 12 12"><circle cx="7" cy="4.6" r="3" fill="none" stroke="#eee" stroke-width=".9"/><path d="M4.8 6.9 L1.2 10.6" stroke="#eee" stroke-width=".9"/></svg>
<span class="t" style="top:548px;font-size:8.2px;line-height:11px;color:#d8d8d8;left:45.60px;">Поиск</span>
<svg style="left:134px;top:543px" width="41" height="20" viewBox="0 0 41 20">
<path d="M2.8 18 L9 12 L13 7.5 L16.4 4.6 L18.6 5.6 L23 2.2 L26 6 L29 9.4 L31.6 12 L36 6.2 L38.6 9.6 L41 11.6 V19 H2z" fill="#e3a18c"/>
<path d="M16.4 4.6 L18.6 5.6 L21.4 12 L20 17 L15 10z" fill="#f6c9b4"/><path d="M23 2.2 L26 6 L27 12 L24.600 15 L22.600 8z" fill="#f3bda6"/>
<path d="M18.600 5.600 L23 2.200 L22.600 8 L24.400 15.600 L21.400 12z" fill="#8d6590"/><path d="M9 12 L13 7.500 L14 12 L11 17.600 L6.600 17z" fill="#eeb29c"/>
<path d="M13 7.500 L15 10 L16.600 17 L13.600 17.800 L14 12z" fill="#9a6f92"/><path d="M29 9.400 L31.600 12 L30.400 16.400 L27 15.600z" fill="#a87a90"/>
<path d="M36 6.200 L38.600 9.600 L37.600 14 L35 15.600 L34.600 10z" fill="#f1b8a2"/><path d="M31.600 12 L36 6.200 L34.600 10 L35 15.600 L32 16z" fill="#b98594"/>
<path d="M.6 20 L4.600 17 L12 16.600 L24 15.200 L41 15.800 V20z" fill="#c9961a"/>
<ellipse cx="23" cy="17.600" rx="6.400" ry="1.500" fill="#9a6a3a"/><ellipse cx="22.600" cy="17.700" rx="4.400" ry=".9" fill="#6c6cae"/></svg>
<svg style="left:182px;top:545.5px" width="16" height="15" viewBox="0 0 16 15"><ellipse cx="7" cy="5.6" rx="6" ry="4.2" fill="#f0f0f4" stroke="#d04060" stroke-width=".8"/><path d="M2.6 5 q4-2.4 8.4 0" stroke="#d04060" stroke-width=".9" fill="none"/><path d="M8 7 L13.6 12" stroke="#3b6ee0" stroke-width="1.1"/><circle cx="9" cy="11.6" r="1.3" fill="none" stroke="#3b6ee0" stroke-width=".9"/><circle cx="13" cy="8.4" r="1.2" fill="none" stroke="#3b6ee0" stroke-width=".9"/></svg>
<svg style="left:208.5px;top:545.5px" width="11" height="14" viewBox="0 0 11 14"><path d="M1 3 h9 l-1.2 10 h-6.6z" fill="#e8eef4"/><path d="M.6 2 h9.8 v1.6 h-9.8z" fill="#cfd8e0"/><path d="M3.6 6 a2.4 2.4 0 1 0 3.8 0" fill="none" stroke="#3b8ee0" stroke-width="1"/></svg>
<span class="t" style="top:548px;font-size:6.2px;line-height:9px;color:#fff;letter-spacing:0.017px;left:221.50px;">Корзина</span>
<svg style="left:291px;top:545.5px" width="15" height="15" viewBox="0 0 15 15"><circle cx="7.5" cy="7" r="5.8" fill="#1f8fe0"/><path d="M2 8 a5.6 5.6 0 0 1 11-2 q-3-2.6-6 .4 q-2 2.4 .6 4.6 q-4.6 .6-5.6-3z" fill="#38c6b0"/><path d="M4 8.4 q3.4 3 8.4 .2 q-1.4 4-5.6 4 q-2.6-.6-2.8-4.2z" fill="#1560c0"/><rect x="2.6" y="10" width="5" height="3.6" fill="#f0a020"/><path d="M2.6 11.2 h5" stroke="#7a4a00" stroke-width=".6"/></svg>
<svg style="left:315.5px;top:545px" width="15" height="15" viewBox="0 0 15 15"><circle cx="7.5" cy="8" r="5.9" fill="#ff9a1e"/><path d="M2 6 q0-3 2.4-4.6 q-.4 2 1 2.6 q2-2.6 5.6-1 q3 2 2.4 6 q-.8 4.4-5.6 5 q5-3 2-7.4 q-3.4-1.6-4.6 1 q-1.4 3 1.6 4.600 q-4.600 .4-5.6-4z" fill="#ff4a3a"/><circle cx="7.600" cy="8.200" r="2.900" fill="#7a3ad8"/><path d="M4.600 6 q2-2 4.400-.8 q-2.400.4-2.600 2.400z" fill="#ffd23a"/></svg>
<span class="t" style="top:548px;font-size:6.2px;line-height:9px;color:#fff;letter-spacing:-0.112px;left:331.00px;">Шерхан, 12 лет. Ра...</span>
<div style="left:394.40px;top:542.00px;width:84.60px;height:21.00px;background:#62564f;"></div>
<svg style="left:400px;top:546px" width="14" height="13" viewBox="0 0 14 13"><rect x="4.600" y=".8" width="8.600" height="11.200" rx=".8" fill="#21a366"/><rect x="8.800" y=".8" width="4.400" height="3.700" fill="#33c481"/><rect x="8.800" y="8.300" width="4.400" height="3.700" fill="#185c37"/><rect x="8.800" y="4.500" width="4.400" height="3.800" fill="#107c41"/><rect x=".6" y="3" width="7.600" height="7" rx=".7" fill="#107c41"/><path d="M2.700 4.800 L6 8.400 M6 4.800 L2.700 8.400" stroke="#fff" stroke-width="1"/></svg>
<span class="t" style="top:548px;font-size:6.2px;line-height:9px;color:#fff;letter-spacing:-0.028px;left:415.00px;">Отчет по деньгам ...</span>
<svg style="left:0;top:560px" width="1000" height="3" viewBox="0 0 1000 3"><path d="M203.9 1.6H283.3V3H203.9zM313.2 1.6H393.6V3H313.2zM395 1.6H478.800V3H395z" fill="#ee9c80"/></svg>
<svg style="left:732px;top:545px" width="190" height="16" viewBox="0 0 190 16">
<rect x="1.600" y="3.300" width="8.400" height="8.400" rx=".8" fill="#7c7676"/><path d="M4 5 h3.600 v3 h-3.600z M5.800 8 v1.600" fill="none" stroke="#c8c8c8" stroke-width=".7"/><rect x="2.200" y="9" width="2.400" height="1.900" fill="#e81123"/><circle cx="8.600" cy="10" r="1.500" fill="#f0f0f0"/>
<path d="M16.400 3.900 h4.600" stroke="#e0e0e0" stroke-width=".9"/><rect x="16" y="5.600" width="5.400" height="5" rx="1.200" fill="none" stroke="#e0e0e0" stroke-width=".9"/>
<path d="M27 7.800 L35.200 3.600 L33.200 11.600 L30.800 9.600 L29.600 11 L29.400 9z" fill="#ececec"/><path d="M27.400 8.900 h2.400 v1.500 h-2.400z" fill="#e81123"/>
<circle cx="43.200" cy="7.600" r="4.100" fill="none" stroke="#b4b4b4" stroke-width=".8"/><path d="M41 10.400 a2.700 2.700 0 1 1 4.400 0" fill="none" stroke="#b4b4b4" stroke-width=".8"/>
<path d="M53 7 l1-2.400 l1 1.800 l1.200-2.200 l1 3 l1.600.4 l-1 3.200 h-4.400 l-1.600-2.600z" fill="#d8d8d8"/>
<circle cx="65.600" cy="5.200" r="1.300" fill="#f0e8e8"/><circle cx="69.600" cy="5.200" r="1.300" fill="#f0e8e8"/><path d="M64 7.400 q0-1.400 1.400-1.400 h3.400 q1.400 0 1.400 1.400 v2.400 q0 1.800-1.800 1.800 h-2.600 q-1.800 0-1.800-1.800z" fill="#e0162b"/><path d="M66.600 8 h1.400 v2 h-1.400z" fill="#fff"/>
<rect x="77" y="2.600" width="8" height="9.600" fill="#4aa3e6"/><path d="M78 5 l2.600-1.400 l2 2.600 l2.400-.6 v3.400 l-3.600 2 l-3.400-1.600z" fill="#9ad4e0"/><rect x="77" y="9.800" width="3.400" height="2.400" fill="#e8c040"/>
<rect x="91" y="3.400" width="5.400" height="4.400" fill="none" stroke="#d4d4d4" stroke-width=".8"/><rect x="94.400" y="5.800" width="2.800" height="5.600" fill="#2a201d" stroke="#d4d4d4" stroke-width=".8"/><path d="M91.600 9.600 h2 M90.800 11.400 h3" stroke="#d4d4d4" stroke-width=".8"/>
<rect x="102.200" y="3.200" width="8" height="6" fill="#4a4a4a" stroke="#9a9a9a" stroke-width=".7"/><circle cx="106.200" cy="6.200" r="1.700" fill="#20b040"/><path d="M103 11.800 h6.400 M104.600 9.400 v2.400 M107.800 9.400 v2.400" stroke="#c8c8c8" stroke-width=".8"/>
<path d="M119 2.800 l3.800 1.200 v3.800 q0 2.800-3.800 4.600 q-3.800-1.800-3.800-4.600 v-3.800z" fill="#f0f0f0"/><path d="M119 2.800 v9.600 M115.200 7.400 h7.600" stroke="#2a201d" stroke-width=".7"/><path d="M122 8.600 l2.600 4.200 h-5.200z" fill="#f0c020"/>
<path d="M128.400 12.200 a3.800 3.800 0 0 1 3.800-3.800 M128.400 12.200 a6 6 0 0 1 6-6 M128.400 12.200 a8.400 8.400 0 0 1 6.600-8.200" fill="none" stroke="#b0b0b0" stroke-width=".8"/>
<path d="M141 8.200 l5.800-2.200 l2.800 3.200 l-5.800 2.800z" fill="#b4b4b4"/><path d="M143.400 8.800 l2 2.400 l4.400-4.800" fill="none" stroke="#30c040" stroke-width="1.400"/>
<rect x="155" y="3.200" width="6.400" height="8.200" fill="#ececec"/><path d="M156.400 5.200 h3.600 M156.400 7 h2" stroke="#c03030" stroke-width=".8"/><circle cx="161.200" cy="10.800" r="1.600" fill="#e81123"/>
<rect x="167.200" y="5.600" width="7.400" height="4.400" fill="none" stroke="#d4d4d4" stroke-width=".8"/><rect x="168" y="6.400" width="2.400" height="2.800" fill="#d4d4d4"/><rect x="174.800" y="6.900" width=".9" height="1.800" fill="#d4d4d4"/>
<path d="M179.600 6.600 h1.400 l2-2 v6.800 l-2-2 h-1.400z" fill="#d4d4d4"/><path d="M184.600 5.800 q1.400 2.200 0 4.400 M186.200 4.600 q2.200 3.400 0 6.800" fill="none" stroke="#a8a8a8" stroke-width=".7"/>
</svg>
<span class="t" style="top:549px;font-size:6.0px;line-height:8px;color:#e6e6e6;left:923.20px;">РУС</span>
<span class="t" style="top:544px;font-size:5.9px;line-height:8px;color:#f0f0f0;left:804.60px;width:300px;text-align:center;">20:54</span>
<span class="t" style="top:554px;font-size:5.9px;line-height:8px;color:#f0f0f0;left:804.60px;width:300px;text-align:center;">02.04.2025</span>
<svg style="left:978.5px;top:547.5px" width="10" height="10" viewBox="0 0 10 10"><path d="M.6 .8 h8.400 v6 h-4 l-2 2 v-2 h-2.400z" fill="#f4f4f4"/><path d="M2.400 3 h4.800 M2.400 4.800 h4.800" stroke="#2f2521" stroke-width=".7"/></svg>
</div>
</body></html>
